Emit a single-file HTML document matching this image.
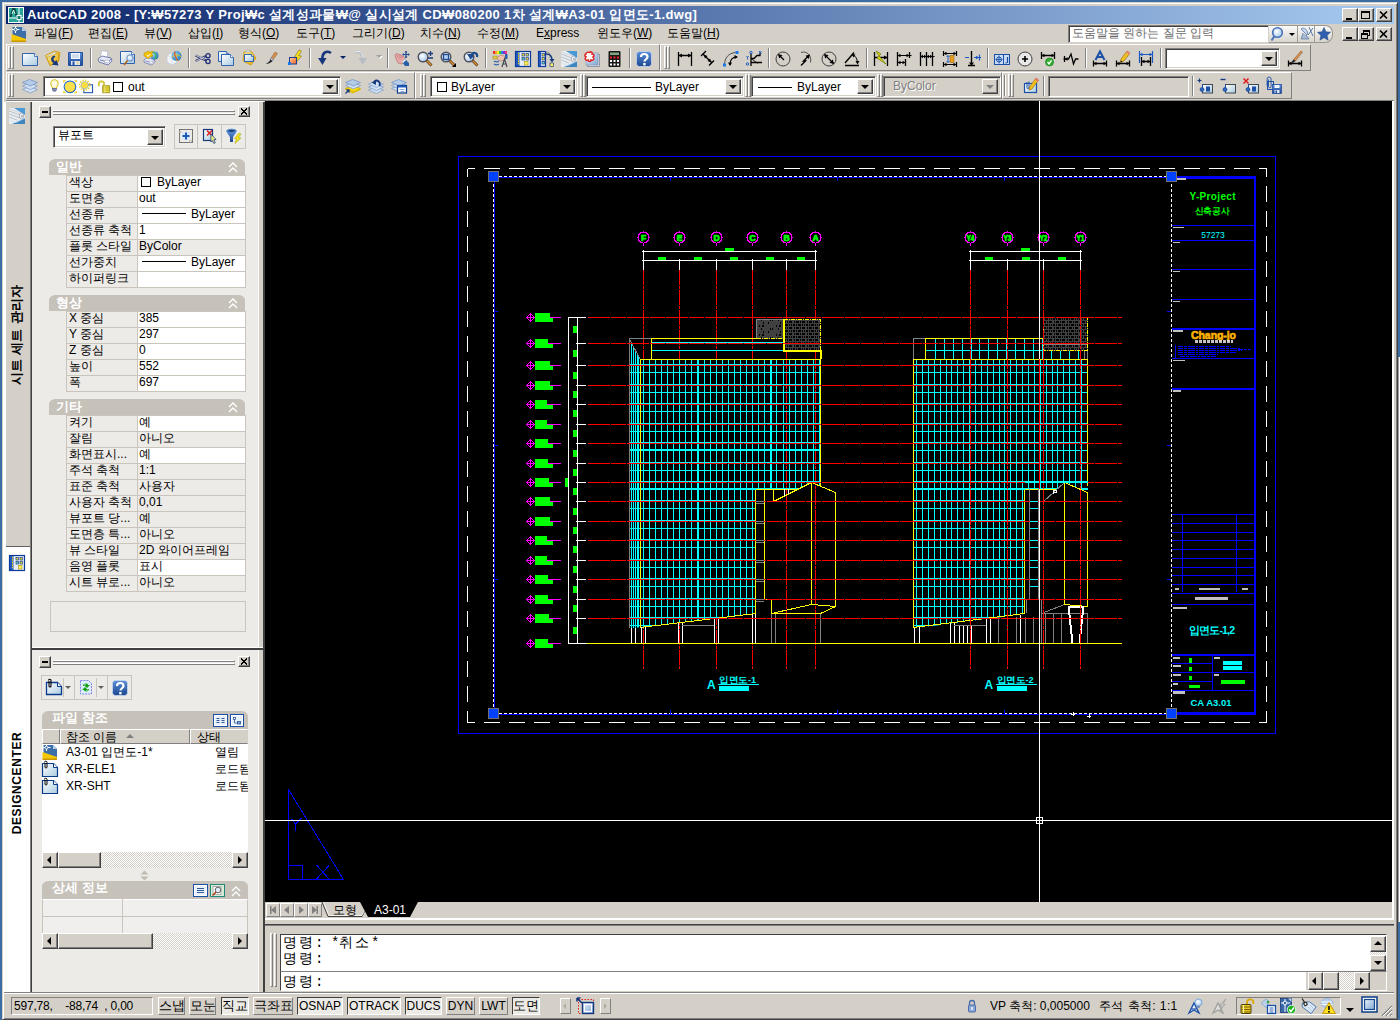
<!DOCTYPE html>
<html><head><meta charset="utf-8"><title>AutoCAD 2008</title><style>
*{box-sizing:border-box}
html,body{margin:0;padding:0}
body{width:1400px;height:1022px;overflow:hidden;position:relative;background:#3a6ea5;font-family:"Liberation Sans",sans-serif;font-size:12px;color:#000;line-height:1}
.a{position:absolute}
.t{position:absolute;white-space:nowrap;line-height:14px;height:14px}
.face{background:#d4d0c8}
.raised{border:1px solid;border-color:#fff #404040 #404040 #fff;box-shadow:inset -1px -1px 0 #808080}
.raised1{border:1px solid;border-color:#fff #808080 #808080 #fff}
.sunk1{border:1px solid;border-color:#808080 #fff #fff #808080}
.sunk2{border:1px solid;border-color:#808080 #fff #fff #808080;box-shadow:inset 1px 1px 0 #404040,inset -1px -1px 0 #d4d0c8}
.btn{position:absolute;background:#d4d0c8;border:1px solid;border-color:#fff #404040 #404040 #fff;box-shadow:inset -1px -1px 0 #808080}
.grip{position:absolute;width:3px;border:1px solid;border-color:#fff #808080 #808080 #fff;background:#d4d0c8}
.vsep{position:absolute;width:2px;border-left:1px solid #808080;border-right:1px solid #fff}
.combo{position:absolute;background:#fff;border:1px solid;border-color:#808080 #fff #fff #808080;box-shadow:inset 1px 1px 0 #404040,inset -1px -1px 0 #d4d0c8}
.cbtn{position:absolute;right:2px;top:2px;bottom:2px;width:16px;background:#d4d0c8;border:1px solid;border-color:#fff #404040 #404040 #fff;box-shadow:inset -1px -1px 0 #808080}
.arr{position:absolute;width:0;height:0;border-left:4px solid transparent;border-right:4px solid transparent;border-top:4px solid #000}
.tb{position:absolute;background:#d4d0c8;border:1px solid;border-color:#fff #808080 #808080 #fff}
svg{position:absolute;overflow:visible}
u{text-decoration:underline}
</style></head><body>
<svg width="0" height="0" style="left:0;top:0"><defs><linearGradient id="gp" x1="0" y1="0" x2="1" y2="1"><stop offset="0" stop-color="#fff"/><stop offset="1" stop-color="#a9cbe0"/></linearGradient><linearGradient id="gy" x1="0" y1="0" x2="1" y2="1"><stop offset="0" stop-color="#fff3a0"/><stop offset="1" stop-color="#e0a000"/></linearGradient><linearGradient id="gb" x1="0" y1="0" x2="0" y2="1"><stop offset="0" stop-color="#5b8fd8"/><stop offset="1" stop-color="#1d4690"/></linearGradient><linearGradient id="gl" x1="0" y1="0" x2="1" y2="1"><stop offset="0" stop-color="#e8f1fa"/><stop offset="1" stop-color="#7fa6d4"/></linearGradient><linearGradient id="go" x1="0" y1="0" x2="1" y2="1"><stop offset="0" stop-color="#ffd0a0"/><stop offset="1" stop-color="#f06020"/></linearGradient><radialGradient id="gg" cx="0.35" cy="0.35" r="0.8"><stop offset="0" stop-color="#8fd8f8"/><stop offset="1" stop-color="#1a6ab0"/></radialGradient><radialGradient id="gm" cx="0.4" cy="0.4" r="0.7"><stop offset="0" stop-color="#fff"/><stop offset="1" stop-color="#9cc4ee"/></radialGradient></defs></svg>
<div class="a" style="left:0px;top:1020px;width:1400px;height:2px;background:#fff"></div>
<div class="a" style="left:2px;top:2px;width:1396px;height:1018px;background:#d4d0c8;border:1px solid;border-color:#d4d0c8 #404040 #404040 #d4d0c8;box-shadow:inset 1px 1px 0 #fff,inset -1px -1px 0 #808080"></div>
<div class="a" style="left:6px;top:6px;width:1388px;height:18px;background:linear-gradient(to right,#0a246a 0%,#a6caf0 100%)"></div>
<svg style="left:8px;top:7px" width="16" height="16" viewBox="0 0 16 16"><rect width="16" height="16" fill="#fff"/><rect x="1" y="1" width="14" height="14" fill="#2aa59a"/><path d="M2.500 10L5 2h1.500l2 7" stroke="#0b4a44" stroke-width="2" fill="none"/><path d="M4 7L5.500 3 7 7" stroke="#d0fff8" stroke-width="1" fill="none"/><path d="M1 11h7M11 1v7M11 13v2M13.500 10.500h2" stroke="#fff" stroke-width="1"/><rect x="9" y="8.500" width="4" height="4" fill="#1b7a70" stroke="#fff"/></svg>
<div class="t" style="left:27px;top:8px;color:#fff;font-weight:bold;font-size:13px;letter-spacing:0.34px">AutoCAD 2008 - [Y:₩57273 Y Proj₩c 설계성과물₩@ 실시설계 CD₩080200 1차 설계₩A3-01 입면도-1.dwg]</div>
<div class="btn" style="left:1342px;top:8px;width:16px;height:14px"><svg style="left:0;top:0" width="14" height="12" viewBox="0 0 14 12" shape-rendering="crispEdges"><rect x="3" y="9" width="6" height="2" fill="#000"/></svg></div>
<div class="btn" style="left:1358px;top:8px;width:16px;height:14px"><svg style="left:0;top:0" width="14" height="12" viewBox="0 0 14 12" shape-rendering="crispEdges"><rect x="2.5" y="2.5" width="8" height="7" fill="none" stroke="#000"/><rect x="2" y="2" width="9" height="2" fill="#000"/></svg></div>
<div class="btn" style="left:1376px;top:8px;width:16px;height:14px"><svg style="left:0;top:0" width="14" height="12" viewBox="0 0 14 12" shape-rendering="crispEdges"><path d="M3 2.500l7 7M10 2.500l-7 7" stroke="#000" stroke-width="1.700" fill="none" shape-rendering="geometricPrecision"/></svg></div>
<div class="btn" style="left:1342px;top:27px;width:16px;height:14px"><svg style="left:0;top:0" width="14" height="12" viewBox="0 0 14 12" shape-rendering="crispEdges"><rect x="3" y="9" width="6" height="2" fill="#000"/></svg></div>
<div class="btn" style="left:1358px;top:27px;width:16px;height:14px"><svg style="left:0;top:0" width="14" height="12" viewBox="0 0 14 12" shape-rendering="crispEdges"><rect x="4.5" y="2.5" width="6" height="5" fill="none" stroke="#000"/><rect x="4" y="2" width="7" height="2" fill="#000"/><rect x="2.5" y="5.5" width="6" height="5" fill="#d4d0c8" stroke="#000"/><rect x="2" y="5" width="7" height="2" fill="#000"/></svg></div>
<div class="btn" style="left:1376px;top:27px;width:16px;height:14px"><svg style="left:0;top:0" width="14" height="12" viewBox="0 0 14 12" shape-rendering="crispEdges"><path d="M3 2.500l7 7M10 2.500l-7 7" stroke="#000" stroke-width="1.700" fill="none" shape-rendering="geometricPrecision"/></svg></div>
<svg style="left:11px;top:26px" width="16" height="16" viewBox="0 0 16 16"><path d="M1.500 1h9.500l4 4v8H1.500z" fill="#3c6ea8"/><path d="M11 1l4 4h-4z" fill="#b5cde8"/><path d="M0.500 8l14.500 5v2.500H0.500z" fill="#f4c800"/><path d="M0.500 14.500h14.500v1.500H0.500z" fill="#c99700"/><path d="M4.500 0v7M1 3.500h7.500" stroke="#fff" stroke-width="1"/><circle cx="4.500" cy="3.500" r="1.500" fill="#3c6ea8" stroke="#fff"/></svg>
<div class="t" style="left:34px;top:26px;">파일(<u>F</u>)</div>
<div class="t" style="left:88px;top:26px;">편집(<u>E</u>)</div>
<div class="t" style="left:144px;top:26px;">뷰(<u>V</u>)</div>
<div class="t" style="left:188px;top:26px;">삽입(<u>I</u>)</div>
<div class="t" style="left:238px;top:26px;">형식(<u>O</u>)</div>
<div class="t" style="left:296px;top:26px;">도구(<u>T</u>)</div>
<div class="t" style="left:352px;top:26px;">그리기(<u>D</u>)</div>
<div class="t" style="left:420px;top:26px;">치수(<u>N</u>)</div>
<div class="t" style="left:477px;top:26px;">수정(<u>M</u>)</div>
<div class="t" style="left:536px;top:26px;">E<u>x</u>press</div>
<div class="t" style="left:597px;top:26px;">윈도우(<u>W</u>)</div>
<div class="t" style="left:667px;top:26px;">도움말(<u>H</u>)</div>
<div class="a" style="left:1068px;top:25px;width:201px;height:18px;background:#fff;border:1px solid;border-color:#808080 #d4d0c8 #d4d0c8 #808080;box-shadow:inset 1px 1px 0 #404040"></div>
<div class="t" style="left:1072px;top:26px;color:#6e6e6e">도움말을 원하는 질문 입력</div>
<div class="a" style="left:1269px;top:25px;width:64px;height:18px;background:linear-gradient(#fafafa,#d8d5cd);border:1px solid #9a978f;border-left:none;border-radius:0 8px 8px 0"></div>
<div class="a" style="left:1297px;top:26px;width:1px;height:16px;background:#a09d96"></div>
<div class="a" style="left:1314px;top:26px;width:1px;height:16px;background:#a09d96"></div>
<svg style="left:1271px;top:26px" width="16" height="16" viewBox="0 0 16 16"><circle cx="6.500" cy="6.500" r="4.800" fill="url(#gm)" stroke="#4870b8" stroke-width="1.600"/><path d="M3.500 10l-3 4.500" stroke="#4870b8" stroke-width="2"/></svg>
<svg style="left:1299px;top:26px" width="16" height="16" viewBox="0 0 16 16"><path d="M2 3c3-3 8 2 6 6z" fill="#c8d8ec" stroke="#5878a8" stroke-width="0.800"/><path d="M4 7l-2 6h8l-3-4" fill="#a8b8d0" stroke="#5878a8" stroke-width="0.700"/><path d="M10 1l4 9M14 2l-5 7" stroke="#5878a8" stroke-width="1"/></svg>
<svg style="left:1317px;top:27px" width="14" height="14" viewBox="0 0 16 16"><path d="M8 0.500l2.200 5 5.300 0.500-4 3.600 1.200 5.400L8 12.200 3.300 15l1.200-5.400-4-3.600 5.300-0.500z" fill="#3060b0" stroke="#20407c" stroke-width="0.600"/></svg>
<div class="arr" style="left:1289px;top:33px;border-left-width:3px;border-right-width:3px;border-top-width:3px"></div>
<div class="tb" style="left:6px;top:44px;width:654px;height:27px;"></div>
<div class="grip" style="left:8px;top:46px;height:23px"></div><div class="grip" style="left:11px;top:46px;height:23px"></div>
<svg style="left:22px;top:50px" width="16" height="16" viewBox="0 0 16 16"><path d="M0.5 3.5h12l3 3v9h-15z" fill="url(#gp)" stroke="#2f62b0"/><path d="M12.5 3.5v3h3" fill="#fff" stroke="#2f62b0" stroke-width="0.800"/></svg>
<svg style="left:45px;top:50px" width="16" height="16" viewBox="0 0 16 16"><path d="M0.500 5.500l9-4.500 5.500 1.500-1.500 9-8.500 4z" fill="url(#gy)" stroke="#c89400" stroke-width="0.800"/><path d="M2.500 6l8-4 1 8-7 4z" fill="#eef4fa" stroke="#9ab" stroke-width="0.500"/><path d="M2 7.500l11-4.500 1 7.500-9 5z" fill="url(#gy)" stroke="#c89400" stroke-width="0.600"/><path d="M9.500 5.500c-4 1-4.500 5-1 7.500l-1.500 1.800 6.500 0.700-2-5.500-1.500 1.500c-2-1.500-2-4 0.500-4.500z" fill="#17387c"/></svg>
<svg style="left:68px;top:50px" width="16" height="16" viewBox="0 0 16 16"><path d="M0.500 2.500h14v13h-14z" fill="url(#gb)" stroke="#2450a0"/><rect x="3" y="3" width="9" height="6" fill="#f4f8ff"/><path d="M4 5h7M4 7h7" stroke="#a0b4d0" stroke-width="0.800"/><rect x="3" y="11" width="9" height="4" fill="#dfe8f4"/><rect x="4.500" y="11.500" width="2" height="3.500" fill="#2450a0"/><rect x="9" y="11.500" width="1.500" height="3" fill="#e0d070"/></svg>
<div class="vsep" style="left:90px;top:48px;height:20px"></div>
<svg style="left:97px;top:50px" width="16" height="16" viewBox="0 0 16 16"><path d="M4.500 0.500l6.500 1-1 7-6.500-1z" fill="#fff" stroke="#a8b0cc" stroke-width="0.700"/><path d="M1 9l4-3 9 2 1 3-4 4-9-3z" fill="#e4e8f4" stroke="#5a64a0" stroke-width="0.800"/><path d="M3 10l8 2 3-3" fill="none" stroke="#5a64a0" stroke-width="0.800"/><path d="M7 12l4 1 2-2-4-1z" fill="#fff" stroke="#8890b8" stroke-width="0.500"/></svg>
<svg style="left:120px;top:50px" width="16" height="16" viewBox="0 0 16 16"><path d="M0.5 1.5h11l3 3v9h-14z" fill="url(#gp)" stroke="#2f62b0"/><path d="M11.5 1.5v3h3" fill="#fff" stroke="#2f62b0" stroke-width="0.800"/><circle cx="10" cy="8" r="3.200" fill="url(#gm)" stroke="#6a8cc0" stroke-width="1"/><path d="M7.500 10.500L4 15" stroke="#b06820" stroke-width="1.800"/></svg>
<svg style="left:143px;top:50px" width="16" height="16" viewBox="0 0 16 16"><g transform="translate(0,3) scale(0.8)"><path d="M4.500 0.500l6.500 1-1 7-6.500-1z" fill="#fff" stroke="#a8b0cc" stroke-width="0.700"/><path d="M1 9l4-3 9 2 1 3-4 4-9-3z" fill="#e4e8f4" stroke="#5a64a0" stroke-width="0.800"/><path d="M3 10l8 2 3-3" fill="none" stroke="#5a64a0" stroke-width="0.800"/><path d="M7 12l4 1 2-2-4-1z" fill="#fff" stroke="#8890b8" stroke-width="0.500"/></g><circle cx="11.500" cy="5.500" r="4" fill="url(#gg)"/><path d="M10 2c3 1 4 5 2 7" stroke="#40b040" stroke-width="1.200" fill="none"/><path d="M1 3l3-1 1-1 2 1 3-1-1 3 1 2-3 1-2 2-2-2-2-1z" fill="#f0c000" stroke="#c09000" stroke-width="0.500"/><path d="M4 5l1 1.500 2-2.500" stroke="#fff" stroke-width="1" fill="none"/></svg>
<svg style="left:166px;top:50px" width="16" height="16" viewBox="0 0 16 16"><path d="M1 5l5-2 5 2v7l-5 3-5-3z" fill="#f0f4fa" stroke="#b8c4d4" stroke-width="0.600"/><path d="M6 8v7M1 5l5 3 5-3" stroke="#c8d0dc" stroke-width="0.600" fill="none"/><circle cx="10.500" cy="6" r="5" fill="url(#gg)"/><path d="M6 7c3-3 7-3 9 0M8 2c2 3 3 6 3 9" stroke="#e8c020" stroke-width="1" fill="none"/><path d="M9 1.500c-1 4 1 7 3 9" stroke="#e03020" stroke-width="1" fill="none"/></svg>
<div class="vsep" style="left:188px;top:48px;height:20px"></div>
<svg style="left:195px;top:50px" width="16" height="16" viewBox="0 0 16 16"><path d="M0.500 5.500l10.500 5M0.500 11l10.500-5" stroke="#3a4270" stroke-width="2"/><path d="M0.500 5.200l9 4.300M0.500 11.300l9-4.300" stroke="#dfe4f4" stroke-width="0.800"/><circle cx="13" cy="5.800" r="2.100" fill="none" stroke="#1c2c78" stroke-width="1.300"/><circle cx="13" cy="11.500" r="2.100" fill="none" stroke="#1c2c78" stroke-width="1.300"/></svg>
<svg style="left:218px;top:50px" width="16" height="16" viewBox="0 0 16 16"><path d="M0.5 1.5h8l2 2v8h-10z" fill="url(#gp)" stroke="#2f62b0"/><path d="M8.5 1.5v2h2" fill="#fff" stroke="#2f62b0" stroke-width="0.800"/><path d="M3.5 4.5h9l3 3v8h-12z" fill="url(#gp)" stroke="#2f62b0"/><path d="M12.5 4.5v3h3" fill="#fff" stroke="#2f62b0" stroke-width="0.800"/></svg>
<svg style="left:241px;top:50px" width="16" height="16" viewBox="0 0 16 16"><path d="M3 2l7-1 5 7-5 7-8-4z" fill="url(#gy)" stroke="#c89400" stroke-width="0.800"/><path d="M4 2l2-2 3 0.500 1 1.500z" fill="#e8e8e8" stroke="#909090" stroke-width="0.500"/><path d="M3.5 4.5h7l2 2v5h-9z" fill="url(#gp)" stroke="#2f62b0"/><path d="M10.5 4.5v2h2" fill="#fff" stroke="#2f62b0" stroke-width="0.800"/></svg>
<svg style="left:264px;top:50px" width="16" height="16" viewBox="0 0 16 16"><path d="M11 2l2.500 1.500-5 7-2-1.500z" fill="#d89050" stroke="#805020" stroke-width="0.500"/><path d="M7.500 7.500l2 1.500-1.500 2.500-2-1.500z" fill="#c0c8d8" stroke="#606878" stroke-width="0.500"/><path d="M6.500 9.500l2 1.500c-2 2-4 3-7 3 2-1 4-2 5-4.500z" fill="#202020"/></svg>
<svg style="left:287px;top:50px" width="16" height="16" viewBox="0 0 16 16"><path d="M12 0l2.500 1-3 4.500 3 0.500-6 7 1.500-5.500-2.500-0.500z" fill="#f8e020" stroke="#807000" stroke-width="0.600"/><rect x="2.500" y="7.500" width="7" height="6.500" fill="url(#go)" stroke="#1c3c90" stroke-width="1"/><rect x="1" y="12" width="3" height="3" fill="#1878e8"/></svg>
<div class="vsep" style="left:309px;top:48px;height:20px"></div>
<svg style="left:317px;top:50px" width="16" height="16" viewBox="0 0 16 16"><path d="M14 3C9 0 5 3 5.500 9" fill="none" stroke="#17387c" stroke-width="2.600"/><path d="M1 8l4.500 7 4-7z" fill="#17387c"/></svg>
<svg style="left:352px;top:50px" width="16" height="16" viewBox="0 0 16 16"><path d="M2 3c5-3 9 0 8.500 6" fill="none" stroke="#b8bcc4" stroke-width="2.600"/><path d="M15 8l-4.500 7-4-7z" fill="#b8bcc4"/><path d="M2 2.500c5-3 9 0 9 5" fill="none" stroke="#fff" stroke-width="0.800"/></svg>
<div class="vsep" style="left:387px;top:48px;height:20px"></div>
<svg style="left:394px;top:51px" width="16" height="16" viewBox="0 0 16 16"><path d="M1 4l2-2 2 2 1-1 2 2 1 0 2 3-3 5-4-1-2-4z" fill="#e8a8a8" stroke="#b06868" stroke-width="0.600"/><path d="M2.500 4l3 4M4.500 3.500l2.500 4M6.500 4l2 3" stroke="#c07878" stroke-width="0.600"/><path d="M8 11l3-3 4 4v3h-4z" fill="#2860a8"/><path d="M8 11l3-3 1 1-3 3z" fill="#fff"/><path d="M12 0v7M8.500 3.500h7" stroke="#1e4a90" stroke-width="1.200"/><path d="M12 0l-1.500 1.500h3zM12 7l-1.500-1.500h3zM8.500 3.500l1.500-1.500v3zM15.500 3.500l-1.500-1.500v3z" fill="#1e4a90"/></svg>
<svg style="left:417px;top:51px" width="16" height="16" viewBox="0 0 16 16"><path d="M9 9l5.500 5.500" stroke="#3a2a18" stroke-width="2.600"/><path d="M9.500 9.500l4.800 4.800" stroke="#e09030" stroke-width="1.500"/><circle cx="6" cy="6" r="4.800" fill="url(#gm)" stroke="#50505c" stroke-width="1.400"/><path d="M11 2.500h5M13.500 0v5M11 7h5" stroke="#17387c" stroke-width="1.300"/></svg>
<svg style="left:440px;top:51px" width="16" height="16" viewBox="0 0 16 16"><path d="M9 9l5.500 5.500" stroke="#3a2a18" stroke-width="2.600"/><path d="M9.500 9.500l4.800 4.800" stroke="#e09030" stroke-width="1.500"/><circle cx="6" cy="6" r="4.800" fill="url(#gm)" stroke="#50505c" stroke-width="1.400"/><rect x="3.500" y="3.500" width="5" height="5" fill="#b8d0f0" stroke="#1e4a90" stroke-width="1.300"/><path d="M16 12v4h-4z" fill="#000"/></svg>
<svg style="left:463px;top:51px" width="16" height="16" viewBox="0 0 16 16"><path d="M9 9l5.500 5.500" stroke="#3a2a18" stroke-width="2.600"/><path d="M9.500 9.500l4.800 4.800" stroke="#e09030" stroke-width="1.500"/><circle cx="6" cy="6" r="4.800" fill="url(#gm)" stroke="#50505c" stroke-width="1.400"/><path d="M14 6c1-4-3-5-5-3" fill="none" stroke="#1e4a90" stroke-width="2.200"/><path d="M4 3h6v3l-2.500 2.500z" fill="#1e4a90"/></svg>
<div class="vsep" style="left:485px;top:48px;height:20px"></div>
<svg style="left:492px;top:51px" width="16" height="16" viewBox="0 0 16 16"><path d="M1 0h2v3H1z" fill="#f03030"/><path d="M3 0h2v3H3z" fill="#f0a020"/><path d="M5 0h2v3H5z" fill="#f0f020"/><path d="M7 0h2v3H7z" fill="#30c030"/><path d="M9 0h2v3H9z" fill="#2080f0"/><path d="M11 0h2v3h-2z" fill="#8030d0"/><path d="M13 0h2v3h-2z" fill="#f03090"/><path d="M4 7l5-3 6 2-2 3-5 1z" fill="#f0c0b0" stroke="#a06050" stroke-width="0.500"/><rect x="1" y="5" width="4" height="3" fill="#e0d040" stroke="#908020" stroke-width="0.500"/><path d="M2 10c2 1.500 3 1.500 5 0M2 13c2 1.500 3 1.500 5 0" stroke="#3868b0" stroke-width="1.300" fill="none"/><path d="M10 16l2.500-8 2.500 8M11 13h3" stroke="#404850" stroke-width="1.200" fill="none"/><rect x="13" y="3" width="2.500" height="5" fill="#2860b0"/></svg>
<svg style="left:515px;top:51px" width="16" height="16" viewBox="0 0 16 16"><rect x="0.500" y="0.500" width="15" height="15" fill="#e8eef8" stroke="#0a3a9a" stroke-width="1.200"/><rect x="1" y="1" width="3.500" height="14" fill="#2058c0"/><path d="M3 2.500h1M3 5h1M3 7.500h1M3 10h1M3 12.500h1" stroke="#ffe000" stroke-width="1.400"/><rect x="7" y="2.500" width="2.500" height="2.500" fill="#e8e040" stroke="#204080" stroke-width="0.700"/><rect x="11" y="2.500" width="2.500" height="2.500" fill="#e8e040" stroke="#204080" stroke-width="0.700"/><rect x="7" y="6.500" width="2.500" height="2.500" fill="#60d0c0" stroke="#204080" stroke-width="0.700"/><rect x="11" y="6.500" width="2.500" height="2.500" fill="#e8e040" stroke="#204080" stroke-width="0.700"/><rect x="9.500" y="10.500" width="3.500" height="3.500" fill="#fff060" stroke="#b0a020" stroke-width="0.700"/></svg>
<svg style="left:538px;top:51px" width="16" height="16" viewBox="0 0 16 16"><rect x="0.500" y="0.500" width="7" height="15" fill="#e8eef8" stroke="#0a3a9a" stroke-width="1.200"/><rect x="1" y="1" width="2" height="14" fill="#2058c0"/><rect x="4" y="2.500" width="2.500" height="2.500" fill="#e8e040" stroke="#204080" stroke-width="0.700"/><rect x="4" y="6.500" width="2.500" height="2.500" fill="#e8e040" stroke="#204080" stroke-width="0.700"/><rect x="4" y="10.500" width="2.500" height="2.500" fill="#60d0c0" stroke="#204080" stroke-width="0.700"/><path d="M8 1h2l2 2v4" fill="none" stroke="#808890" stroke-width="1"/><path d="M8 3c4 0 6 2 6 6" fill="none" stroke="#17387c" stroke-width="1.400"/><path d="M11.500 8h5l-2.500 3.500z" fill="#17387c"/><rect x="12" y="12" width="3.500" height="3.500" fill="#fff060" stroke="#204080" stroke-width="0.700"/></svg>
<svg style="left:561px;top:51px" width="16" height="16" viewBox="0 0 16 16"><rect width="16" height="16" fill="#e9edf1"/><path d="M5 0H16V7z" fill="#4a9ad8"/><path d="M3 16L16 10V16z" fill="#3f86c0"/><path d="M0 3l11 4M0 6l10 3.500M0 9l8 3" stroke="#aeb6be" stroke-width="0.800"/><path d="M0 1l12 4c3 1 3 5 0 5.500L0 6" fill="none" stroke="#c9cfd5" stroke-width="0.700"/><ellipse cx="12.500" cy="8" rx="2.300" ry="2.900" fill="#f6f8fa" stroke="#9098a0" stroke-width="0.700"/><ellipse cx="12.800" cy="8.200" rx="1" ry="1.400" fill="#a8b0b8"/><path d="M0 12l7 2.500 9-4.500" stroke="#d0e4f4" stroke-width="0.700" fill="none"/></svg>
<svg style="left:584px;top:51px" width="16" height="16" viewBox="0 0 16 16"><rect x="3.500" y="3.500" width="12" height="12" fill="#d8dce4" stroke="#808898" stroke-width="0.800"/><rect x="2" y="2" width="12" height="12" fill="url(#gl)" stroke="#8090a8" stroke-width="0.600"/><path d="M2 3c0-2 3-2 3-1 1-2 4-1 3 1 2 0 3 2 1 3 2 2 0 4-2 3 0 2-3 2-3 0-2 1-4-1-2-3-2-1-1-3 0-3z" fill="#fff" stroke="#e02020" stroke-width="1.500"/></svg>
<svg style="left:607px;top:51px" width="16" height="16" viewBox="0 0 16 16"><rect x="1.500" y="0" width="12" height="16" rx="1" fill="#181818"/><rect x="3" y="1.500" width="9" height="2.500" fill="#80a880"/><g fill="#fff"><rect x="3" y="9" width="2" height="2"/><rect x="6.500" y="9" width="2" height="2"/><rect x="10" y="9" width="2" height="2"/><rect x="3" y="12.500" width="2" height="2"/><rect x="6.500" y="12.500" width="2" height="2"/><rect x="10" y="12.500" width="2" height="2"/></g><g fill="#f02020"><rect x="3" y="5.500" width="2" height="2"/><rect x="6.500" y="5.500" width="2" height="2"/><rect x="10" y="5.500" width="2" height="2"/></g></svg>
<div class="vsep" style="left:629px;top:48px;height:20px"></div>
<svg style="left:636px;top:51px" width="16" height="16" viewBox="0 0 16 16"><rect x="0.500" y="0.500" width="15" height="15" rx="3" fill="url(#gb)" stroke="#c8d8f0" stroke-width="0.800"/><path d="M5 6c0-4 6.500-4 6.500 0 0 2-3 2.500-3 4.500" fill="none" stroke="#fff" stroke-width="2.200"/><rect x="7.200" y="12" width="2.400" height="2.400" fill="#fff"/></svg>
<div class="arr" style="left:340px;top:56px;border-left-width:3px;border-right-width:3px;border-top-width:3px;border-top-color:#0a246a"></div>
<div class="arr" style="left:377px;top:56px;border-left-width:3px;border-right-width:3px;border-top-width:3px;border-top-color:#fff"></div>
<div class="arr" style="left:376px;top:55px;border-left-width:3px;border-right-width:3px;border-top-width:3px;border-top-color:#a0a0a0"></div>
<div class="tb" style="left:660px;top:44px;width:651px;height:27px;"></div>
<div class="grip" style="left:664px;top:46px;height:23px"></div><div class="grip" style="left:667px;top:46px;height:23px"></div>
<svg style="left:677px;top:51px" width="16" height="16" viewBox="0 0 16 16"><path d="M1.500 1v14M14.500 1v14M1.500 4.500h13" stroke="#000" fill="none" stroke-width="1.300"/><path d="M1.500 4.500l3.500-2v4zM14.500 4.500l-3.500-2v4z" fill="#000"/></svg>
<svg style="left:700px;top:51px" width="16" height="16" viewBox="0 0 16 16"><path d="M3 3l9 9M1 5l5-5M9 14.500l5-5" stroke="#000" fill="none" stroke-width="1.400"/><path d="M3.500 3.500l4 1.500-2.500 2.500zM11.500 11.500l-4-1.500 2.500-2.500z" fill="#000"/></svg>
<svg style="left:723px;top:51px" width="16" height="16" viewBox="0 0 16 16"><path d="M1.500 14c0-7 4-12 11-12.500" fill="none" stroke="#505050" stroke-width="1"/><path d="M7 14c0-5 2-8 7-8" stroke="#000" fill="none" stroke-width="1.200"/><path d="M7 15l-2-3.500h4zM15 6l-3.500-2v4z" fill="#000"/><rect x="0" y="12.500" width="3" height="3" fill="#1878e8"/><rect x="12.500" y="0" width="3" height="3" fill="#1878e8"/></svg>
<svg style="left:746px;top:51px" width="16" height="16" viewBox="0 0 16 16"><path d="M5 2v13M5 11.500h11M5 7.500h3l3-3h3v-3" stroke="#000" fill="none" stroke-width="1.300"/><path d="M5 7.500l7 5" stroke="#000" fill="none" stroke-width="0.800"/><circle cx="5" cy="1.500" r="1.200" fill="none" stroke="#1858c0"/><circle cx="1.500" cy="13" r="1.200" fill="none" stroke="#1858c0"/><path d="M0.500 5l1 1.500 1-1.500M1.500 6.500v2M13 0l2.500 3M15.500 0l-2.500 3" stroke="#1858c0" stroke-width="0.900" fill="none"/></svg>
<div class="vsep" style="left:768px;top:48px;height:20px"></div>
<svg style="left:775px;top:51px" width="16" height="16" viewBox="0 0 16 16"><circle cx="8" cy="8" r="7" fill="none" stroke="#404040" stroke-width="1"/><path d="M9 9l-5-5" stroke="#000" fill="none" stroke-width="1.300"/><path d="M3 3l4.500 1.200-3.300 3.300z" fill="#000"/></svg>
<svg style="left:798px;top:51px" width="16" height="16" viewBox="0 0 16 16"><path d="M3 1.500c6-2 11 3 9.500 10" fill="none" stroke="#505050" stroke-width="1"/><path d="M3 14.500l4.500-4.500h-2l5-5" stroke="#000" fill="none" stroke-width="1.400"/><path d="M12 3.500l-1.200 4.500-3.300-3.300z" fill="#000"/></svg>
<svg style="left:821px;top:51px" width="16" height="16" viewBox="0 0 16 16"><circle cx="8" cy="8" r="7" fill="none" stroke="#404040" stroke-width="1"/><path d="M3.500 3.500l9 9" stroke="#000" fill="none" stroke-width="1.300"/><path d="M3 3l4.500 1.200-3.300 3.300zM13 13l-4.500-1.200 3.300-3.300z" fill="#000"/></svg>
<svg style="left:844px;top:51px" width="16" height="16" viewBox="0 0 16 16"><path d="M1 14.500h14M1 12l9-10.500" stroke="#000" fill="none" stroke-width="1.400"/><path d="M8 3.500c3 1 5.500 4 5.500 8.500" stroke="#000" fill="none" stroke-width="1"/><path d="M7.500 3l4 0.500-2 3zM13.500 13.500l-2-3.500h4z" fill="#000"/></svg>
<div class="vsep" style="left:866px;top:48px;height:20px"></div>
<svg style="left:873px;top:51px" width="16" height="16" viewBox="0 0 16 16"><path d="M1.500 1v14M14.500 1v14M1.500 6.500h13" stroke="#000" fill="none" stroke-width="1.300"/><path d="M3 0l5 3-2 2 7 8-9-6 2-2z" fill="#f0d000" stroke="#608000" stroke-width="0.700"/><path d="M14.500 6.500l-3.500-2v4z" fill="#000"/></svg>
<svg style="left:896px;top:51px" width="16" height="16" viewBox="0 0 16 16"><path d="M1.500 1v14M9.500 8v7M13.500 1v6" stroke="#000" fill="none" stroke-width="1.300"/><path d="M1.500 4.500h14M1.500 11.500h8" stroke="#000" fill="none" stroke-width="1.100"/><path d="M1.500 4.500l3-1.800v3.600zM13.500 4.500l-3-1.800v3.600zM1.500 11.500l3-1.800v3.600zM9.500 11.500l-3-1.800v3.600z" fill="#000"/></svg>
<svg style="left:919px;top:51px" width="16" height="16" viewBox="0 0 16 16"><path d="M1.500 1v14M7.500 1v14M13.500 1v14" stroke="#000" fill="none" stroke-width="1.300"/><path d="M1.500 5.500h14" stroke="#000" fill="none" stroke-width="1.100"/><path d="M1.500 5.500l2.500-1.800v3.600zM7.500 5.500l-2.500-1.800v3.600zM7.500 5.500l2.500-1.800v3.600zM13.500 5.500l-2.500-1.800v3.600z" fill="#000"/></svg>
<svg style="left:942px;top:51px" width="16" height="16" viewBox="0 0 16 16"><path d="M1.500 0v5M14.500 0v5M1.500 2.500h13M1.500 11v5M14.500 11v5M1.500 13.500h13" stroke="#000" fill="none" stroke-width="1.200"/><path d="M1.500 2.500l3-1.800v3.600zM14.500 2.500l-3-1.800v3.600zM1.500 13.500l3-1.800v3.600zM14.500 13.500l-3-1.800v3.600z" fill="#000"/><rect x="8" y="4.500" width="4" height="7" fill="#e8a020" stroke="#905000" stroke-width="0.500"/><path d="M6 4.500v7M4.500 6l1.500-1.500 1.500 1.500M4.500 10l1.500 1.500 1.500-1.500" stroke="#1858c0" stroke-width="0.900" fill="none"/></svg>
<svg style="left:965px;top:51px" width="16" height="16" viewBox="0 0 16 16"><path d="M6.500 0v13M3 14.500h7" stroke="#000" fill="none" stroke-width="1.400"/><path d="M6.500 15l-2.500-3.500h5z" fill="#000"/><path d="M0 6.500h4M9 6.500h7M14.500 3.500v6" stroke="#1858c0" stroke-width="1.200"/><path d="M14 6.500l-3-1.800v3.600z" fill="#1858c0"/></svg>
<div class="vsep" style="left:987px;top:48px;height:20px"></div>
<svg style="left:994px;top:51px" width="16" height="16" viewBox="0 0 16 16"><rect x="0.500" y="3.500" width="15" height="10" fill="#c8dcf4" stroke="#1c50a8" stroke-width="1"/><path d="M9.500 3.500v10" stroke="#1c50a8"/><circle cx="5" cy="8.500" r="2.500" fill="none" stroke="#1c50a8"/><path d="M5 4.500v8M1.500 8.500h7" stroke="#1c50a8" stroke-width="0.900"/><path d="M11.500 12h1M13.500 6v6" stroke="#1c50a8" stroke-width="1.300"/></svg>
<svg style="left:1017px;top:51px" width="16" height="16" viewBox="0 0 16 16"><circle cx="8" cy="8" r="7" fill="#e8e8e8" stroke="#404040" stroke-width="1"/><path d="M5 8h6M8 5v6" stroke="#000" stroke-width="1.600"/></svg>
<svg style="left:1040px;top:51px" width="16" height="16" viewBox="0 0 16 16"><path d="M1.500 1v7M14.500 1v7M1.500 4.500h13" stroke="#000" fill="none" stroke-width="1.300"/><path d="M1.500 4.500l3-1.800v3.600zM14.500 4.500l-3-1.800v3.600z" fill="#000"/><circle cx="9.500" cy="11" r="4" fill="#30b030" stroke="#107010" stroke-width="0.600"/><path d="M7.500 11l1.500 1.800 2.500-3.500" stroke="#fff" stroke-width="1.400" fill="none"/></svg>
<svg style="left:1063px;top:51px" width="16" height="16" viewBox="0 0 16 16"><path d="M1.500 5v6M0.500 8h5l2.500-5 2.500 10 2-5h3" stroke="#000" fill="none" stroke-width="1.300"/><path d="M1.500 8l3-1.800v3.600z" fill="#000"/></svg>
<div class="vsep" style="left:1085px;top:48px;height:20px"></div>
<svg style="left:1092px;top:51px" width="16" height="16" viewBox="0 0 16 16"><path d="M1.500 9.500v6M14.500 9.500v6M1.500 12.500h13" stroke="#000" stroke-width="1.300" fill="none"/><path d="M1.500 12.500l3-1.800v3.600zM14.500 12.500l-3-1.800v3.600z" fill="#000"/><path d="M3.500 9L8 0.500 12.500 9M5.500 6h5" stroke="#1c50a8" stroke-width="2" fill="none"/></svg>
<svg style="left:1115px;top:51px" width="16" height="16" viewBox="0 0 16 16"><path d="M1.500 9.500v6M14.500 9.500v6M1.500 12.500h13" stroke="#000" stroke-width="1.300" fill="none"/><path d="M1.500 12.500l3-1.800v3.600zM14.500 12.500l-3-1.800v3.600z" fill="#000"/><path d="M12 0l3 2-6 8-3.500 1.500L6 8z" fill="#f0c020" stroke="#906000" stroke-width="0.600"/><path d="M12 0l3 2-1 1.500-3-2z" fill="#f08080"/><path d="M5.500 11.500l0.300-2 1.700 1.200z" fill="#000"/></svg>
<svg style="left:1138px;top:51px" width="16" height="16" viewBox="0 0 16 16"><path d="M3.500 6v9M12.500 6v9M3.500 10.500h9" stroke="#000" fill="none" stroke-width="1.300"/><path d="M3.500 10.500l3-1.800v3.600zM12.500 10.500l-3-1.800v3.600z" fill="#000"/><path d="M1.500 0v12M14.500 0v12M1.500 3.500h13" stroke="#1858c0" stroke-width="1.200" fill="none"/><path d="M1.500 3.500l3-1.800v3.600zM14.500 3.500l-3-1.800v3.600z" fill="#1858c0"/></svg>
<div class="vsep" style="left:1160px;top:48px;height:20px"></div>
<svg style="left:1287px;top:51px" width="16" height="16" viewBox="0 0 16 16"><path d="M1.500 9.500v6M14.500 9.500v6M1.500 12.500h13" stroke="#000" stroke-width="1.300" fill="none"/><path d="M1.500 12.500l3-1.800v3.600zM14.500 12.500l-3-1.800v3.600z" fill="#000"/><path d="M14 0l1.500 1-7 9-2-1.500z" fill="#d89050" stroke="#805020" stroke-width="0.500"/><path d="M6.500 8.500l2 1.500c-2 2-4 2-6.500 2 2-1 3.500-1.500 4.500-3.500z" fill="#202020"/></svg>
<div class="combo" style="left:1165px;top:48px;width:115px;height:21px;background:#fff"><div class="cbtn"><div class="arr" style="left:3px;top:5px;border-top-color:#000"></div></div></div>
<div class="tb" style="left:6px;top:72px;width:409px;height:27px;"></div>
<div class="grip" style="left:8px;top:74px;height:23px"></div><div class="grip" style="left:11px;top:74px;height:23px"></div>
<svg style="left:22px;top:78px" width="16" height="16" viewBox="0 0 16 16"><path d="M0.500 11.5l7-3 8 3-7 3.500z" fill="#d0e0f2" stroke="#7898c4" stroke-width="0.700"/><path d="M0.500 8l7-3 8 3-7 3.500z" fill="#d0e0f2" stroke="#7898c4" stroke-width="0.700"/><path d="M0.500 4.5l7-3 8 3-7 3.500z" fill="#b4cce8" stroke="#6a8cbc" stroke-width="0.700"/></svg>
<div class="combo" style="left:43px;top:76px;width:298px;height:21px;background:#fff"><svg style="left:4px;top:2px" width="13" height="13" viewBox="0 0 16 16"><path d="M3.500 5.500a4.500 4.500 0 1 1 9 0c0 2.500-2 3.500-2 6h-5c0-2.500-2-3.500-2-6z" fill="#fffbe0" stroke="#d8c020" stroke-width="1.300"/><rect x="5.500" y="11.500" width="5" height="2.500" fill="#8890c0" stroke="#404880" stroke-width="0.600"/><path d="M6.500 15h3" stroke="#404880"/></svg><svg style="left:19px;top:3px" width="14" height="14" viewBox="0 0 16 16"><path d="M0 1h3v-1zM16 1h-3v-1zM0 14h3v1.500zM16 14h-3v1.500z" fill="#f0d020"/><rect x="0" y="0.500" width="2" height="2" fill="#f0d020"/><rect x="14" y="0.500" width="2" height="2" fill="#f0d020"/><rect x="0" y="13" width="2" height="2" fill="#f0d020"/><rect x="14" y="13" width="2" height="2" fill="#f0d020"/><circle cx="8" cy="7.800" r="6.700" fill="url(#gy)" stroke="#1868d0" stroke-width="1.200"/><circle cx="8" cy="7.800" r="5.600" fill="#fae04a"/></svg><svg style="left:35px;top:3px" width="14" height="14" viewBox="0 0 16 16"><rect x="5.500" y="5.500" width="10" height="9" fill="#fff" stroke="#1c50a8" stroke-width="1.200"/><circle cx="6.500" cy="6" r="5.800" fill="none" stroke="#f0d020" stroke-width="1.600" stroke-dasharray="1.600 1.400"/><circle cx="6.500" cy="6" r="4.300" fill="#f8dc40" stroke="#88b0e0" stroke-width="0.700"/></svg><svg style="left:53px;top:3px" width="14" height="14" viewBox="0 0 16 16"><path d="M2 7V4.500a3 3 0 0 1 6 0V6" fill="none" stroke="#c0b010" stroke-width="2"/><path d="M2 7V4.500a3 3 0 0 1 6 0V6" fill="none" stroke="#fff890" stroke-width="0.600"/><path d="M6.500 6.500h8v8h-8z" fill="#e8dc40" stroke="#908010" stroke-width="0.900"/><path d="M7 9h7M7 11.500h7" stroke="#a89810" stroke-width="0.800"/><path d="M9 6.500v8" stroke="#fff8a0" stroke-width="0.800"/></svg><div class="a" style="left:69px;top:5px;width:10px;height:10px;border:1px solid #000;background:#fff"></div><div class="t" style="left:84px;top:3px">out</div><div class="cbtn"><div class="arr" style="left:3px;top:5px;border-top-color:#000"></div></div></div>
<svg style="left:345px;top:78px" width="16" height="16" viewBox="0 0 16 16"><path d="M0.500 10.5l7-3 8 3-7 3.500z" fill="#f8dc10" stroke="#c0a000" stroke-width="0.700"/><path d="M0.500 10.500l7 3.500 8-3.500v1.500l-8 3.500-7-3.500z" fill="#e0c000"/><path d="M0.500 7.5l7-3 8 3-7 3.500z" fill="#d0e0f2" stroke="#7898c4" stroke-width="0.700"/><path d="M0.500 4.5l7-3 8 3-7 3.500z" fill="#b4cce8" stroke="#6a8cbc" stroke-width="0.700"/><path d="M0.500 15.500l3-3M1.500 12h2.500v2.500" stroke="#17387c" stroke-width="1.300" fill="none"/></svg>
<svg style="left:368px;top:78px" width="16" height="16" viewBox="0 0 16 16"><path d="M0.500 12l7-3 8 3-7 3.500z" fill="#d0e0f2" stroke="#7898c4" stroke-width="0.700"/><path d="M0.500 9l7-3 8 3-7 3.500z" fill="#d0e0f2" stroke="#7898c4" stroke-width="0.700"/><path d="M0.500 6l7-3 8 3-7 3.500z" fill="#cfe0f2" stroke="#7fa0cc" stroke-width="0.700"/><path d="M11.500 8c1.500-4-2-6.500-5-5" fill="none" stroke="#17387c" stroke-width="1.800"/><path d="M3.500 4.500l4.500-2.500v5z" fill="#17387c"/></svg>
<svg style="left:391px;top:78px" width="16" height="16" viewBox="0 0 16 16"><path d="M0.500 10.5l7-3 8 3-7 3.500z" fill="#d0e0f2" stroke="#7898c4" stroke-width="0.700"/><path d="M0.500 7.5l7-3 8 3-7 3.500z" fill="#d0e0f2" stroke="#7898c4" stroke-width="0.700"/><path d="M0.500 4.5l7-3 8 3-7 3.500z" fill="#b4cce8" stroke="#6a8cbc" stroke-width="0.700"/><rect x="6.500" y="7.500" width="9" height="7.500" fill="#fff" stroke="#0a3a8a" stroke-width="1.200"/><rect x="6.500" y="7.500" width="9" height="2" fill="#2058c0"/><path d="M8.500 11.500h5M9.500 13.500h4" stroke="#88a8d8" stroke-width="1"/></svg>
<div class="tb" style="left:415px;top:72px;width:587px;height:27px;"></div>
<div class="grip" style="left:420px;top:74px;height:23px"></div><div class="grip" style="left:423px;top:74px;height:23px"></div>
<div class="combo" style="left:430px;top:76px;width:148px;height:21px;background:#fff"><div class="a" style="left:6px;top:5px;width:10px;height:10px;border:1px solid #000;background:#fff"></div><div class="t" style="left:20px;top:3px">ByLayer</div><div class="cbtn"><div class="arr" style="left:3px;top:5px;border-top-color:#000"></div></div></div>
<div class="grip" style="left:580px;top:74px;height:23px"></div><div class="grip" style="left:583px;top:74px;height:23px"></div>
<div class="combo" style="left:586px;top:76px;width:158px;height:21px;background:#fff"><div class="a" style="left:5px;top:10px;width:59px;height:1px;background:#000"></div><div class="t" style="left:68px;top:3px">ByLayer</div><div class="cbtn"><div class="arr" style="left:3px;top:5px;border-top-color:#000"></div></div></div>
<div class="grip" style="left:745px;top:74px;height:23px"></div><div class="grip" style="left:748px;top:74px;height:23px"></div>
<div class="combo" style="left:751px;top:76px;width:125px;height:21px;background:#fff"><div class="a" style="left:6px;top:10px;width:34px;height:1px;background:#000"></div><div class="t" style="left:45px;top:3px">ByLayer</div><div class="cbtn"><div class="arr" style="left:3px;top:5px;border-top-color:#000"></div></div></div>
<div class="grip" style="left:877px;top:74px;height:23px"></div><div class="grip" style="left:880px;top:74px;height:23px"></div>
<div class="combo" style="left:883px;top:76px;width:118px;height:21px;background:#d4d0c8"><div class="t" style="left:9px;top:2px;color:#808080;text-shadow:1px 1px 0 #fff">ByColor</div><div class="cbtn"><div class="arr" style="left:3px;top:5px;border-top-color:#808080"></div></div></div>
<div class="tb" style="left:1002px;top:72px;width:290px;height:27px;"></div>
<div class="vsep" style="left:1004px;top:75px;height:21px"></div>
<div class="grip" style="left:1008px;top:74px;height:23px"></div><div class="grip" style="left:1011px;top:74px;height:23px"></div>
<svg style="left:1023px;top:78px" width="16" height="16" viewBox="0 0 16 16"><rect x="1.500" y="5.500" width="12" height="9" fill="url(#gp)" stroke="#1c50a8" stroke-width="1.200"/><path d="M4 4v5.500a1 1 0 0 0 2 0V3.500" fill="none" stroke="#1c50a8" stroke-width="1"/><path d="M13 0l2.500 2-6.500 9-3 1 0.500-3z" fill="#f0c020" stroke="#906000" stroke-width="0.600"/><path d="M13 0l2.500 2-1 1.400-2.500-2z" fill="#f07080"/></svg>
<div class="vsep" style="left:1043px;top:76px;height:20px"></div>
<div class="a" style="left:1048px;top:76px;width:141px;height:21px;background:#d4d0c8;border:1px solid;border-color:#808080 #fff #fff #808080;box-shadow:inset 1px 1px 0 #404040"></div>
<div class="vsep" style="left:1192px;top:76px;height:20px"></div>
<svg style="left:1197px;top:78px" width="16" height="16" viewBox="0 0 16 16"><rect x="5.500" y="6.500" width="10" height="8.500" fill="url(#gp)" stroke="#404850" stroke-width="1"/><rect x="9" y="8.500" width="4" height="5" fill="#1c50a8"/><path d="M5.500 6.500v5" stroke="#1c50a8" stroke-width="1"/><circle cx="5" cy="11.500" r="2" fill="#2868c8" stroke="#17387c" stroke-width="0.600"/><path d="M0.500 2.500h4M2.500 0.500v4" stroke="#17387c" stroke-width="1.200"/></svg>
<svg style="left:1220px;top:78px" width="16" height="16" viewBox="0 0 16 16"><rect x="5.500" y="6.500" width="10" height="8.500" fill="url(#gp)" stroke="#404850" stroke-width="1"/><path d="M5.500 6.500v5" stroke="#1c50a8" stroke-width="1"/><circle cx="5" cy="11.500" r="2" fill="#2868c8" stroke="#17387c" stroke-width="0.600"/><path d="M0.500 1.500h5" stroke="#17387c" stroke-width="1.400"/></svg>
<svg style="left:1243px;top:78px" width="16" height="16" viewBox="0 0 16 16"><rect x="5.500" y="6.500" width="10" height="8.500" fill="url(#gp)" stroke="#404850" stroke-width="1"/><rect x="9" y="8.500" width="4" height="5" fill="#1c50a8"/><path d="M5.500 6.500v5" stroke="#1c50a8" stroke-width="1"/><circle cx="5" cy="11.500" r="2" fill="#2868c8" stroke="#17387c" stroke-width="0.600"/><path d="M0.500 0.500l5 5M5.500 0.500l-5 5" stroke="#e02020" stroke-width="1.600"/></svg>
<svg style="left:1266px;top:78px" width="16" height="16" viewBox="0 0 16 16"><path d="M2.500 1.500v7a1.300 1.300 0 0 0 2.600 0V1a1.500 1.500 0 0 0-4 0v7" fill="none" stroke="#1c50a8" stroke-width="0.900"/><rect x="1.500" y="3.500" width="6" height="8" fill="none" stroke="#1c50a8"/><rect x="6.500" y="6.500" width="9" height="9" fill="url(#gb)" stroke="#2450a0" stroke-width="0.800"/><rect x="8.500" y="7" width="5" height="3" fill="#f4f8ff"/><rect x="8.500" y="12" width="5" height="3" fill="#dfe8f4"/><rect x="9.500" y="12.500" width="1.500" height="2.500" fill="#2450a0"/></svg>
<div class="a" style="left:6px;top:100px;width:1388px;height:1px;background:#808080"></div>
<div class="a" style="left:6px;top:101px;width:258px;height:1px;background:#fff"></div>
<div class="a" style="left:6px;top:102px;width:24px;height:445px;background:#d4d0c8"></div>
<div class="a" style="left:6px;top:546px;width:24px;height:1px;background:#606060"></div>
<div class="a" style="left:6px;top:547px;width:24px;height:446px;background:#fff"></div>
<div class="a" style="left:4px;top:102px;width:2px;height:891px;background:#fff"></div>
<div class="a" style="left:30px;top:102px;width:1px;height:891px;background:#808080"></div>
<div class="a" style="left:31px;top:102px;width:1px;height:891px;background:#404040"></div>
<svg style="left:9px;top:108px" width="16" height="16" viewBox="0 0 16 16"><rect width="16" height="16" fill="#e9edf1"/><path d="M5 0H16V7z" fill="#4a9ad8"/><path d="M3 16L16 10V16z" fill="#3f86c0"/><path d="M0 3l11 4M0 6l10 3.500M0 9l8 3" stroke="#aeb6be" stroke-width="0.800"/><path d="M0 1l12 4c3 1 3 5 0 5.500L0 6" fill="none" stroke="#c9cfd5" stroke-width="0.700"/><ellipse cx="12.500" cy="8" rx="2.300" ry="2.900" fill="#f6f8fa" stroke="#9098a0" stroke-width="0.700"/><ellipse cx="12.800" cy="8.200" rx="1" ry="1.400" fill="#a8b0b8"/><path d="M0 12l7 2.500 9-4.500" stroke="#d0e4f4" stroke-width="0.700" fill="none"/></svg>
<svg style="left:9px;top:555px" width="16" height="16" viewBox="0 0 16 16"><rect x="0.500" y="0.500" width="15" height="15" fill="#e8eef8" stroke="#0a3a9a" stroke-width="1.200"/><rect x="1" y="1" width="3.500" height="14" fill="#2058c0"/><path d="M3 2.500h1M3 5h1M3 7.500h1M3 10h1M3 12.500h1" stroke="#ffe000" stroke-width="1.400"/><rect x="7" y="2.500" width="2.500" height="2.500" fill="#e8e040" stroke="#204080" stroke-width="0.700"/><rect x="11" y="2.500" width="2.500" height="2.500" fill="#e8e040" stroke="#204080" stroke-width="0.700"/><rect x="7" y="6.500" width="2.500" height="2.500" fill="#60d0c0" stroke="#204080" stroke-width="0.700"/><rect x="11" y="6.500" width="2.500" height="2.500" fill="#e8e040" stroke="#204080" stroke-width="0.700"/><rect x="9.500" y="10.500" width="3.500" height="3.500" fill="#fff060" stroke="#b0a020" stroke-width="0.700"/></svg>
<div class="t" style="left:17px;top:335px;width:0;height:0"><div style="position:absolute;white-space:nowrap;transform:translate(-50%,-50%) rotate(-90deg);font-weight:bold;font-size:13px;letter-spacing:0.3px">시트 세트 관리자</div></div>
<div class="t" style="left:17px;top:783px;width:0;height:0"><div style="position:absolute;white-space:nowrap;transform:translate(-50%,-50%) rotate(-90deg);font-weight:bold;font-size:12px;letter-spacing:0.6px">DESIGNCENTER</div></div>
<div class="a" style="left:32px;top:102px;width:226px;height:891px;background:#edebe8"></div>
<div class="a" style="left:258px;top:102px;width:1px;height:891px;background:#fff"></div>
<div class="a" style="left:259px;top:102px;width:4px;height:891px;background:#d4d0c8"></div>
<div class="a" style="left:263px;top:102px;width:1px;height:891px;background:#404040"></div>
<div class="a" style="left:264px;top:102px;width:1px;height:891px;background:#404040"></div>
<div class="a" style="left:32px;top:647px;width:231px;height:1px;background:#fff"></div>
<div class="a" style="left:32px;top:648px;width:231px;height:2px;background:#404040"></div>
<div class="btn" style="left:39px;top:106px;width:12px;height:12px;"><div class="a" style="left:2px;top:4px;width:6px;height:2px;background:#000"></div></div><div class="a" style="left:53px;top:110px;width:182px;height:2px;border-top:1px solid #fff;border-bottom:1px solid #808080;border-right:1px solid #808080"></div><div class="a" style="left:53px;top:113px;width:182px;height:2px;border-top:1px solid #fff;border-bottom:1px solid #808080;border-right:1px solid #808080"></div><div class="btn" style="left:238px;top:106px;width:12px;height:11px;"><svg style="left:1px;top:1px" width="8" height="7" viewBox="0 0 8 7" shape-rendering="crispEdges"><path d="M1 0.500l6 6M7 0.500l-6 6" stroke="#000" stroke-width="1.500" fill="none"/></svg></div>
<div class="combo" style="left:53px;top:126px;width:113px;height:22px;background:#fff"><div class="t" style="left:4px;top:1px">뷰포트</div><div class="cbtn"><div class="arr" style="left:3px;top:6px;border-top-color:#000"></div></div></div>
<div class="a" style="left:174px;top:124px;width:24px;height:25px;border:1px solid #c9c5bd;background:#edebe8"></div>
<div class="a" style="left:197px;top:124px;width:25px;height:25px;border:1px solid #c9c5bd;background:#edebe8"></div>
<div class="a" style="left:221px;top:124px;width:25px;height:25px;border:1px solid #c9c5bd;background:#edebe8"></div>
<svg style="left:178px;top:128px" width="16" height="16" viewBox="0 0 16 16"><rect x="1.500" y="1.500" width="13" height="13" fill="none" stroke="#000" stroke-dasharray="1 1"/><rect x="4" y="4" width="8" height="8" fill="#dce8f8"/><path d="M8 4.500v7M4.500 8h7" stroke="#1c5cb8" stroke-width="2"/><circle cx="2" cy="4" r="1" fill="#fff" stroke="#707070" stroke-width="0.500"/><circle cx="12.500" cy="13.500" r="1" fill="#fff" stroke="#707070" stroke-width="0.500"/></svg>
<svg style="left:202px;top:128px" width="16" height="16" viewBox="0 0 16 16"><rect x="1.500" y="1.500" width="9" height="11" fill="url(#gp)" stroke="#17387c" stroke-width="1.200"/><path d="M5 2.500l5 5M10 2.500l-5 5" stroke="#e02020" stroke-width="1.500"/><path d="M9 6l5 5.500-2.200 0.200 1.500 3-1.500 0.800-1.500-3-1.500 1.500z" fill="#f8f080" stroke="#17387c" stroke-width="0.800"/></svg>
<svg style="left:226px;top:128px" width="16" height="16" viewBox="0 0 16 16"><ellipse cx="5.500" cy="3" rx="5" ry="2" fill="#3870b0" stroke="#6898d0" stroke-width="0.600"/><path d="M0.500 3.500c1 3 3 3.500 3.500 6v4.500h3V9.500c0.500-2.500 2.500-3 3.500-6z" fill="url(#gb)"/><ellipse cx="5.500" cy="3" rx="3" ry="1" fill="#1c3c70"/><path d="M13 5l2 1-2.500 3.500 2.500 0.500-6 5.500 1.500-4.500-2-0.500z" fill="#f0e020" stroke="#a0a000" stroke-width="0.500"/></svg>
<div class="a" style="left:49px;top:159px;width:196px;height:16px;background:#c6c2b9;border-radius:7px 7px 0 0 / 5px 5px 0 0"></div><div class="t" style="left:56px;top:160px;color:#fff;font-weight:bold;font-size:13px">일반</div><svg style="left:228px;top:162px" width="10" height="11" viewBox="0 0 10 11"><path d="M1 5l4-4 4 4M1 10l4-4 4 4" stroke="#fff" stroke-width="1.300" fill="none"/></svg><div class="a" style="left:66px;top:175px;width:180px;height:17px;border:1px solid #c9c5bd;background:#edebe8"></div><div class="a" style="left:137px;top:175px;width:109px;height:17px;border:1px solid #c9c5bd;background:#fff"></div><div class="t" style="left:69px;top:175px;">색상</div><div class="t" style="left:139px;top:175px;width:105px;overflow:hidden"><span style="display:inline-block;width:10px;height:10px;border:1px solid #000;background:#fff;vertical-align:-1px;margin:0 6px 0 2px"></span>ByLayer</div><div class="a" style="left:66px;top:191px;width:180px;height:17px;border:1px solid #c9c5bd;background:#edebe8"></div><div class="a" style="left:137px;top:191px;width:109px;height:17px;border:1px solid #c9c5bd;background:#fff"></div><div class="t" style="left:69px;top:191px;">도면층</div><div class="t" style="left:139px;top:191px;width:105px;overflow:hidden">out</div><div class="a" style="left:66px;top:207px;width:180px;height:17px;border:1px solid #c9c5bd;background:#edebe8"></div><div class="a" style="left:137px;top:207px;width:109px;height:17px;border:1px solid #c9c5bd;background:#fff"></div><div class="t" style="left:69px;top:207px;">선종류</div><div class="t" style="left:139px;top:207px;width:105px;overflow:hidden"><span style="display:inline-block;width:44px;height:1px;background:#000;vertical-align:4px;margin:0 5px 0 3px"></span>ByLayer</div><div class="a" style="left:66px;top:223px;width:180px;height:17px;border:1px solid #c9c5bd;background:#edebe8"></div><div class="a" style="left:137px;top:223px;width:109px;height:17px;border:1px solid #c9c5bd;background:#fff"></div><div class="t" style="left:69px;top:223px;">선종류 축척</div><div class="t" style="left:139px;top:223px;width:105px;overflow:hidden">1</div><div class="a" style="left:66px;top:239px;width:180px;height:17px;border:1px solid #c9c5bd;background:#edebe8"></div><div class="a" style="left:137px;top:239px;width:109px;height:17px;border:1px solid #c9c5bd;background:#edebe8"></div><div class="t" style="left:69px;top:239px;">플롯 스타일</div><div class="t" style="left:139px;top:239px;width:105px;overflow:hidden">ByColor</div><div class="a" style="left:66px;top:255px;width:180px;height:17px;border:1px solid #c9c5bd;background:#edebe8"></div><div class="a" style="left:137px;top:255px;width:109px;height:17px;border:1px solid #c9c5bd;background:#fff"></div><div class="t" style="left:69px;top:255px;">선가중치</div><div class="t" style="left:139px;top:255px;width:105px;overflow:hidden"><span style="display:inline-block;width:44px;height:1px;background:#000;vertical-align:4px;margin:0 5px 0 3px"></span>ByLayer</div><div class="a" style="left:66px;top:271px;width:180px;height:17px;border:1px solid #c9c5bd;background:#edebe8"></div><div class="a" style="left:137px;top:271px;width:109px;height:17px;border:1px solid #c9c5bd;background:#fff"></div><div class="t" style="left:69px;top:271px;">하이퍼링크</div><div class="t" style="left:139px;top:271px;width:105px;overflow:hidden"></div>
<div class="a" style="left:49px;top:295px;width:196px;height:16px;background:#c6c2b9;border-radius:7px 7px 0 0 / 5px 5px 0 0"></div><div class="t" style="left:56px;top:296px;color:#fff;font-weight:bold;font-size:13px">형상</div><svg style="left:228px;top:298px" width="10" height="11" viewBox="0 0 10 11"><path d="M1 5l4-4 4 4M1 10l4-4 4 4" stroke="#fff" stroke-width="1.300" fill="none"/></svg><div class="a" style="left:66px;top:311px;width:180px;height:17px;border:1px solid #c9c5bd;background:#edebe8"></div><div class="a" style="left:137px;top:311px;width:109px;height:17px;border:1px solid #c9c5bd;background:#fff"></div><div class="t" style="left:69px;top:311px;">X 중심</div><div class="t" style="left:139px;top:311px;width:105px;overflow:hidden">385</div><div class="a" style="left:66px;top:327px;width:180px;height:17px;border:1px solid #c9c5bd;background:#edebe8"></div><div class="a" style="left:137px;top:327px;width:109px;height:17px;border:1px solid #c9c5bd;background:#fff"></div><div class="t" style="left:69px;top:327px;">Y 중심</div><div class="t" style="left:139px;top:327px;width:105px;overflow:hidden">297</div><div class="a" style="left:66px;top:343px;width:180px;height:17px;border:1px solid #c9c5bd;background:#edebe8"></div><div class="a" style="left:137px;top:343px;width:109px;height:17px;border:1px solid #c9c5bd;background:#fff"></div><div class="t" style="left:69px;top:343px;">Z 중심</div><div class="t" style="left:139px;top:343px;width:105px;overflow:hidden">0</div><div class="a" style="left:66px;top:359px;width:180px;height:17px;border:1px solid #c9c5bd;background:#edebe8"></div><div class="a" style="left:137px;top:359px;width:109px;height:17px;border:1px solid #c9c5bd;background:#fff"></div><div class="t" style="left:69px;top:359px;">높이</div><div class="t" style="left:139px;top:359px;width:105px;overflow:hidden">552</div><div class="a" style="left:66px;top:375px;width:180px;height:17px;border:1px solid #c9c5bd;background:#edebe8"></div><div class="a" style="left:137px;top:375px;width:109px;height:17px;border:1px solid #c9c5bd;background:#fff"></div><div class="t" style="left:69px;top:375px;">폭</div><div class="t" style="left:139px;top:375px;width:105px;overflow:hidden">697</div>
<div class="a" style="left:49px;top:399px;width:196px;height:16px;background:#c6c2b9;border-radius:7px 7px 0 0 / 5px 5px 0 0"></div><div class="t" style="left:56px;top:400px;color:#fff;font-weight:bold;font-size:13px">기타</div><svg style="left:228px;top:402px" width="10" height="11" viewBox="0 0 10 11"><path d="M1 5l4-4 4 4M1 10l4-4 4 4" stroke="#fff" stroke-width="1.300" fill="none"/></svg><div class="a" style="left:66px;top:415px;width:180px;height:17px;border:1px solid #c9c5bd;background:#edebe8"></div><div class="a" style="left:137px;top:415px;width:109px;height:17px;border:1px solid #c9c5bd;background:#fff"></div><div class="t" style="left:69px;top:415px;">켜기</div><div class="t" style="left:139px;top:415px;width:105px;overflow:hidden">예</div><div class="a" style="left:66px;top:431px;width:180px;height:17px;border:1px solid #c9c5bd;background:#edebe8"></div><div class="a" style="left:137px;top:431px;width:109px;height:17px;border:1px solid #c9c5bd;background:#edebe8"></div><div class="t" style="left:69px;top:431px;">잘림</div><div class="t" style="left:139px;top:431px;width:105px;overflow:hidden">아니오</div><div class="a" style="left:66px;top:447px;width:180px;height:17px;border:1px solid #c9c5bd;background:#edebe8"></div><div class="a" style="left:137px;top:447px;width:109px;height:17px;border:1px solid #c9c5bd;background:#fff"></div><div class="t" style="left:69px;top:447px;">화면표시...</div><div class="t" style="left:139px;top:447px;width:105px;overflow:hidden">예</div><div class="a" style="left:66px;top:463px;width:180px;height:17px;border:1px solid #c9c5bd;background:#edebe8"></div><div class="a" style="left:137px;top:463px;width:109px;height:17px;border:1px solid #c9c5bd;background:#edebe8"></div><div class="t" style="left:69px;top:463px;">주석 축척</div><div class="t" style="left:139px;top:463px;width:105px;overflow:hidden">1:1</div><div class="a" style="left:66px;top:479px;width:180px;height:17px;border:1px solid #c9c5bd;background:#edebe8"></div><div class="a" style="left:137px;top:479px;width:109px;height:17px;border:1px solid #c9c5bd;background:#edebe8"></div><div class="t" style="left:69px;top:479px;">표준 축척</div><div class="t" style="left:139px;top:479px;width:105px;overflow:hidden">사용자</div><div class="a" style="left:66px;top:495px;width:180px;height:17px;border:1px solid #c9c5bd;background:#edebe8"></div><div class="a" style="left:137px;top:495px;width:109px;height:17px;border:1px solid #c9c5bd;background:#edebe8"></div><div class="t" style="left:69px;top:495px;">사용자 축척</div><div class="t" style="left:139px;top:495px;width:105px;overflow:hidden">0,01</div><div class="a" style="left:66px;top:511px;width:180px;height:17px;border:1px solid #c9c5bd;background:#edebe8"></div><div class="a" style="left:137px;top:511px;width:109px;height:17px;border:1px solid #c9c5bd;background:#edebe8"></div><div class="t" style="left:69px;top:511px;">뷰포트 당...</div><div class="t" style="left:139px;top:511px;width:105px;overflow:hidden">예</div><div class="a" style="left:66px;top:527px;width:180px;height:17px;border:1px solid #c9c5bd;background:#edebe8"></div><div class="a" style="left:137px;top:527px;width:109px;height:17px;border:1px solid #c9c5bd;background:#edebe8"></div><div class="t" style="left:69px;top:527px;">도면층 특...</div><div class="t" style="left:139px;top:527px;width:105px;overflow:hidden">아니오</div><div class="a" style="left:66px;top:543px;width:180px;height:17px;border:1px solid #c9c5bd;background:#edebe8"></div><div class="a" style="left:137px;top:543px;width:109px;height:17px;border:1px solid #c9c5bd;background:#edebe8"></div><div class="t" style="left:69px;top:543px;">뷰 스타일</div><div class="t" style="left:139px;top:543px;width:105px;overflow:hidden">2D 와이어프레임</div><div class="a" style="left:66px;top:559px;width:180px;height:17px;border:1px solid #c9c5bd;background:#edebe8"></div><div class="a" style="left:137px;top:559px;width:109px;height:17px;border:1px solid #c9c5bd;background:#fff"></div><div class="t" style="left:69px;top:559px;">음영 플롯</div><div class="t" style="left:139px;top:559px;width:105px;overflow:hidden">표시</div><div class="a" style="left:66px;top:575px;width:180px;height:17px;border:1px solid #c9c5bd;background:#edebe8"></div><div class="a" style="left:137px;top:575px;width:109px;height:17px;border:1px solid #c9c5bd;background:#edebe8"></div><div class="t" style="left:69px;top:575px;">시트 뷰로...</div><div class="t" style="left:139px;top:575px;width:105px;overflow:hidden">아니오</div>
<div class="a" style="left:50px;top:601px;width:196px;height:31px;border:1px solid #c9c5bd;background:#edebe8"></div>
<div class="btn" style="left:39px;top:656px;width:12px;height:12px;"><div class="a" style="left:2px;top:4px;width:6px;height:2px;background:#000"></div></div><div class="a" style="left:53px;top:660px;width:182px;height:2px;border-top:1px solid #fff;border-bottom:1px solid #808080;border-right:1px solid #808080"></div><div class="a" style="left:53px;top:663px;width:182px;height:2px;border-top:1px solid #fff;border-bottom:1px solid #808080;border-right:1px solid #808080"></div><div class="btn" style="left:238px;top:656px;width:12px;height:11px;"><svg style="left:1px;top:1px" width="8" height="7" viewBox="0 0 8 7" shape-rendering="crispEdges"><path d="M1 0.500l6 6M7 0.500l-6 6" stroke="#000" stroke-width="1.500" fill="none"/></svg></div>
<div class="a" style="left:41px;top:675px;width:91px;height:25px;border:1px solid #c9c5bd;background:#edebe8"></div>
<div class="a" style="left:74px;top:675px;width:1px;height:25px;background:#c9c5bd"></div>
<div class="a" style="left:107px;top:675px;width:1px;height:25px;background:#c9c5bd"></div>
<svg style="left:46px;top:679px" width="16" height="16" viewBox="0 0 16 16"><path d="M0.500 3.500h11l4 4v8h-15z" fill="url(#gp)" stroke="#0a3a8a" stroke-width="1.300"/><path d="M11.500 3.500v4h4" fill="#fff" stroke="#0a3a8a" stroke-width="1"/><path d="M3 2v5a1 1 0 0 0 2 0V1.500a1.300 1.300 0 0 0-2.600 0" fill="none" stroke="#000" stroke-width="1.100"/></svg>
<svg style="left:79px;top:679px" width="16" height="16" viewBox="0 0 16 16"><path d="M1.500 1.500h8l3 3v10.500h-11z" fill="#dceefc" stroke="#8080e0" stroke-width="1" stroke-dasharray="2 1"/><path d="M4 7c0-3 5-3 5-1h2l-3 3-3-3h2c0-1-2-1-2 1zM10 10c0 3-5 3-5 1H3l3-3 3 3H7c0 1 2 1 2-1z" fill="#10a010"/></svg>
<svg style="left:112px;top:680px" width="16" height="16" viewBox="0 0 16 16"><rect x="0.500" y="0.500" width="15" height="15" rx="3" fill="url(#gb)" stroke="#c8d8f0" stroke-width="0.800"/><path d="M5 6c0-4 6.500-4 6.500 0 0 2-3 2.500-3 4.500" fill="none" stroke="#fff" stroke-width="2.200"/><rect x="7.200" y="12" width="2.400" height="2.400" fill="#fff"/></svg>
<div class="a" style="left:63px;top:678px;width:1px;height:19px;background:#c9c5bd"></div>
<div class="a" style="left:96px;top:678px;width:1px;height:19px;background:#c9c5bd"></div>
<div class="arr" style="left:65px;top:686px;border-left-width:3px;border-right-width:3px;border-top-width:3px;border-top-color:#606060"></div>
<div class="arr" style="left:98px;top:686px;border-left-width:3px;border-right-width:3px;border-top-width:3px;border-top-color:#606060"></div>
<div class="a" style="left:42px;top:711px;width:206px;height:18px;background:#c6c2b9;border-radius:7px 7px 0 0 / 5px 5px 0 0"></div><div class="t" style="left:52px;top:711px;color:#fff;font-weight:bold;font-size:13px">파일 참조</div>
<svg style="left:213px;top:714px" width="16" height="13" viewBox="0 0 16 13"><rect x="0.500" y="0.500" width="14" height="12" fill="#e8f0fc" stroke="#1c50a8" stroke-width="1"/><rect x="1.500" y="1.500" width="12" height="10" fill="none" stroke="#fff" stroke-width="1"/><path d="M3.500 4.500h3M8.500 4.500h3M3.500 6.500h3M8.500 6.500h3M3.500 8.500h3M8.500 8.500h3" stroke="#305898" stroke-width="1"/></svg>
<svg style="left:230px;top:714px" width="16" height="13" viewBox="0 0 16 13"><rect x="0.500" y="0.500" width="13" height="12" fill="#e8f0fc" stroke="#1c50a8" stroke-width="1"/><rect x="1.500" y="1.500" width="11" height="10" fill="none" stroke="#fff" stroke-width="1"/><rect x="3.500" y="3.500" width="2" height="2" fill="#fff" stroke="#305898" stroke-width="0.800"/><path d="M4.500 5.500v3.500h2.500" stroke="#305898" stroke-width="0.800" fill="none"/><rect x="7.500" y="7.500" width="3" height="2.500" fill="#80a0d0" stroke="#305898" stroke-width="0.800"/></svg>
<div class="a" style="left:42px;top:729px;width:206px;height:15px;background:#d4d0c8"></div>
<div class="raised1 a" style="left:42px;top:729px;width:18px;height:15px;"></div>
<div class="raised1 a" style="left:60px;top:729px;width:130px;height:15px;"></div>
<div class="a" style="left:190px;top:729px;width:58px;height:15px;border:1px solid;border-color:#fff #d4d0c8 #808080 #fff"></div>
<div class="t" style="left:66px;top:730px;">참조 이름</div>
<div class="t" style="left:197px;top:730px;">상태</div>
<div class="a" style="left:126px;top:734px;width:0;height:0;border-left:4px solid transparent;border-right:4px solid transparent;border-bottom:4px solid #808080"></div>
<div class="a" style="left:42px;top:744px;width:206px;height:108px;background:#fff"></div>
<svg style="left:42px;top:744px" width="16" height="16" viewBox="0 0 16 16"><path d="M1.500 1h9.500l4 4v8H1.500z" fill="#3c6ea8"/><path d="M11 1l4 4h-4z" fill="#b5cde8"/><path d="M0.500 8l14.500 5v2.500H0.500z" fill="#f4c800"/><path d="M0.500 14.500h14.500v1.500H0.500z" fill="#c99700"/><path d="M4.500 0v7M1 3.500h7.500" stroke="#fff" stroke-width="1"/><circle cx="4.500" cy="3.500" r="1.500" fill="#3c6ea8" stroke="#fff"/></svg>
<div class="t" style="left:66px;top:745px;">A3-01 입면도-1*</div>
<div class="t" style="left:215px;top:745px;width:33px;overflow:hidden">열림</div>
<svg style="left:42px;top:761px" width="16" height="16" viewBox="0 0 16 16"><path d="M0.500 2.500h11l4 4v9h-15z" fill="url(#gp)" stroke="#0a3a8a" stroke-width="1.200"/><path d="M11.500 2.500v4h4" fill="#fff" stroke="#0a3a8a" stroke-width="1"/><path d="M3 2v4a1 1 0 0 0 2 0V1.500a1.300 1.300 0 0 0-2.600 0" fill="none" stroke="#000" stroke-width="1"/></svg>
<div class="t" style="left:66px;top:762px;">XR-ELE1</div>
<div class="t" style="left:215px;top:762px;width:33px;overflow:hidden">로드됨</div>
<svg style="left:42px;top:778px" width="16" height="16" viewBox="0 0 16 16"><path d="M0.500 2.500h11l4 4v9h-15z" fill="url(#gp)" stroke="#0a3a8a" stroke-width="1.200"/><path d="M11.500 2.500v4h4" fill="#fff" stroke="#0a3a8a" stroke-width="1"/><path d="M3 2v4a1 1 0 0 0 2 0V1.500a1.300 1.300 0 0 0-2.600 0" fill="none" stroke="#000" stroke-width="1"/></svg>
<div class="t" style="left:66px;top:779px;">XR-SHT</div>
<div class="t" style="left:215px;top:779px;width:33px;overflow:hidden">로드됨</div>
<div class="a" style="left:42px;top:852px;width:206px;height:16px;background:repeating-conic-gradient(#fff 0 25%,#d4d0c8 0 50%) 0 0/2px 2px"></div><div class="btn" style="left:42px;top:852px;width:16px;height:16px;"><div class="a" style="left:4px;top:3px;width:0;height:0;border-top:4px solid transparent;border-bottom:4px solid transparent;border-right:4px solid #000"></div></div><div class="btn" style="left:232px;top:852px;width:16px;height:16px;"><div class="a" style="left:5px;top:3px;width:0;height:0;border-top:4px solid transparent;border-bottom:4px solid transparent;border-left:4px solid #000"></div></div><div class="btn" style="left:58px;top:852px;width:43px;height:16px;"></div>
<svg style="left:140px;top:870px" width="9" height="11" viewBox="0 0 9 11"><path d="M0.500 4.500l4-4 4 4zM0.500 6.500l4 4 4-4z" fill="#c0bcb2"/></svg>
<div class="a" style="left:42px;top:881px;width:206px;height:18px;background:#c6c2b9;border-radius:7px 7px 0 0 / 5px 5px 0 0"></div><div class="t" style="left:52px;top:881px;color:#fff;font-weight:bold;font-size:13px">상세 정보</div>
<svg style="left:193px;top:884px" width="16" height="13" viewBox="0 0 16 13"><rect x="0.500" y="0.500" width="14" height="12" fill="#e8f0fc" stroke="#1c50a8" stroke-width="1"/><rect x="1.500" y="1.500" width="12" height="10" fill="none" stroke="#fff" stroke-width="1"/><path d="M4 4.500h7M4 6.500h7M4 8.500h7" stroke="#305898" stroke-width="1"/></svg>
<svg style="left:210px;top:884px" width="16" height="13" viewBox="0 0 16 13"><rect x="0.500" y="0.500" width="14" height="12" fill="#d8ecd8" stroke="#208878" stroke-width="1"/><rect x="3" y="2.500" width="8" height="8" fill="#fff" stroke="#808080" stroke-width="0.600"/><circle cx="8" cy="6" r="2.800" fill="#e0ecf8" stroke="#505050" stroke-width="0.900"/><path d="M6 8l-3.500 3.500" stroke="#b03010" stroke-width="1.400"/></svg>
<svg style="left:231px;top:886px" width="10" height="11" viewBox="0 0 10 11"><path d="M1 5l4-4 4 4M1 10l4-4 4 4" stroke="#fff" stroke-width="1.300" fill="none"/></svg>
<div class="a" style="left:42px;top:899px;width:206px;height:34px;background:#f0efed;border:1px solid #c9c5bd;border-top:1px solid #fff;border-bottom:none"></div>
<div class="a" style="left:42px;top:916px;width:206px;height:1px;background:#c9c5bd"></div>
<div class="a" style="left:122px;top:899px;width:1px;height:34px;background:#c9c5bd"></div>
<div class="a" style="left:42px;top:933px;width:206px;height:16px;background:repeating-conic-gradient(#fff 0 25%,#d4d0c8 0 50%) 0 0/2px 2px"></div><div class="btn" style="left:42px;top:933px;width:16px;height:16px;"><div class="a" style="left:4px;top:3px;width:0;height:0;border-top:4px solid transparent;border-bottom:4px solid transparent;border-right:4px solid #000"></div></div><div class="btn" style="left:232px;top:933px;width:16px;height:16px;"><div class="a" style="left:5px;top:3px;width:0;height:0;border-top:4px solid transparent;border-bottom:4px solid transparent;border-left:4px solid #000"></div></div><div class="btn" style="left:58px;top:933px;width:95px;height:16px;"></div>
<div class="a" style="left:265px;top:101px;width:1127px;height:801px;background:#000"></div>
<svg style="left:0;top:0" width="1400" height="1022" viewBox="0 0 1400 1022" shape-rendering="crispEdges" fill="none"><rect x="458.5" y="156.5" width="817" height="577" fill="none" stroke="#0000ff" /><path d="M467.5 168.5H1266.5" stroke="#fff" stroke-width="1" fill="none" stroke-dasharray="16 9" stroke-dashoffset="8.5"/><path d="M467.5 722.5H1266.5" stroke="#fff" stroke-width="1" fill="none" stroke-dasharray="16 9" stroke-dashoffset="8.5"/><path d="M467.5 168.5V722.5" stroke="#fff" stroke-width="1" fill="none" stroke-dasharray="16 9" stroke-dashoffset="7.5"/><path d="M1266.5 168.5V722.5" stroke="#fff" stroke-width="1" fill="none" stroke-dasharray="16 9" stroke-dashoffset="7.5"/><path d="M526 317.5H561" stroke="#ff00ff" stroke-width="1" /><path d="M526.5 317.5l4-4 4 4-4 4zM530.5 313v9" stroke="#ff00ff" stroke-width="1" fill="none" /><rect x="535" y="313" width="15" height="5" fill="#00ff00" stroke="none" /><rect x="535" y="318" width="18" height="4" fill="#00ff00" stroke="none" /><path d="M526 343.5H561" stroke="#ff00ff" stroke-width="1" /><path d="M526.5 343.5l4-4 4 4-4 4zM530.5 339v9" stroke="#ff00ff" stroke-width="1" fill="none" /><rect x="535" y="339" width="13" height="5" fill="#00ff00" stroke="none" /><rect x="535" y="344" width="18" height="4" fill="#00ff00" stroke="none" /><path d="M526 365.5H561" stroke="#ff00ff" stroke-width="1" /><path d="M526.5 365.5l4-4 4 4-4 4zM530.5 361v9" stroke="#ff00ff" stroke-width="1" fill="none" /><rect x="535" y="361" width="15" height="5" fill="#00ff00" stroke="none" /><rect x="535" y="366" width="18" height="4" fill="#00ff00" stroke="none" /><path d="M526 385.5H561" stroke="#ff00ff" stroke-width="1" /><path d="M526.5 385.5l4-4 4 4-4 4zM530.5 381v9" stroke="#ff00ff" stroke-width="1" fill="none" /><rect x="535" y="381" width="15" height="5" fill="#00ff00" stroke="none" /><rect x="535" y="386" width="18" height="4" fill="#00ff00" stroke="none" /><path d="M526 404.5H561" stroke="#ff00ff" stroke-width="1" /><path d="M526.5 404.5l4-4 4 4-4 4zM530.5 400v9" stroke="#ff00ff" stroke-width="1" fill="none" /><rect x="535" y="400" width="12" height="5" fill="#00ff00" stroke="none" /><rect x="535" y="405" width="18" height="4" fill="#00ff00" stroke="none" /><path d="M526 424.5H561" stroke="#ff00ff" stroke-width="1" /><path d="M526.5 424.5l4-4 4 4-4 4zM530.5 420v9" stroke="#ff00ff" stroke-width="1" fill="none" /><rect x="535" y="420" width="12" height="5" fill="#00ff00" stroke="none" /><rect x="535" y="425" width="18" height="4" fill="#00ff00" stroke="none" /><path d="M526 443.5H561" stroke="#ff00ff" stroke-width="1" /><path d="M526.5 443.5l4-4 4 4-4 4zM530.5 439v9" stroke="#ff00ff" stroke-width="1" fill="none" /><rect x="535" y="439" width="13" height="5" fill="#00ff00" stroke="none" /><rect x="535" y="444" width="18" height="4" fill="#00ff00" stroke="none" /><path d="M526 463.5H561" stroke="#ff00ff" stroke-width="1" /><path d="M526.5 463.5l4-4 4 4-4 4zM530.5 459v9" stroke="#ff00ff" stroke-width="1" fill="none" /><rect x="535" y="459" width="13" height="5" fill="#00ff00" stroke="none" /><rect x="535" y="464" width="18" height="4" fill="#00ff00" stroke="none" /><path d="M526 482.5H561" stroke="#ff00ff" stroke-width="1" /><path d="M526.5 482.5l4-4 4 4-4 4zM530.5 478v9" stroke="#ff00ff" stroke-width="1" fill="none" /><rect x="535" y="478" width="14" height="5" fill="#00ff00" stroke="none" /><rect x="535" y="483" width="18" height="4" fill="#00ff00" stroke="none" /><path d="M526 501.5H561" stroke="#ff00ff" stroke-width="1" /><path d="M526.5 501.5l4-4 4 4-4 4zM530.5 497v9" stroke="#ff00ff" stroke-width="1" fill="none" /><rect x="535" y="497" width="15" height="5" fill="#00ff00" stroke="none" /><rect x="535" y="502" width="18" height="4" fill="#00ff00" stroke="none" /><path d="M526 521.5H561" stroke="#ff00ff" stroke-width="1" /><path d="M526.5 521.5l4-4 4 4-4 4zM530.5 517v9" stroke="#ff00ff" stroke-width="1" fill="none" /><rect x="535" y="517" width="15" height="5" fill="#00ff00" stroke="none" /><rect x="535" y="522" width="18" height="4" fill="#00ff00" stroke="none" /><path d="M526 540.5H561" stroke="#ff00ff" stroke-width="1" /><path d="M526.5 540.5l4-4 4 4-4 4zM530.5 536v9" stroke="#ff00ff" stroke-width="1" fill="none" /><rect x="535" y="536" width="12" height="5" fill="#00ff00" stroke="none" /><rect x="535" y="541" width="18" height="4" fill="#00ff00" stroke="none" /><path d="M526 560.5H561" stroke="#ff00ff" stroke-width="1" /><path d="M526.5 560.5l4-4 4 4-4 4zM530.5 556v9" stroke="#ff00ff" stroke-width="1" fill="none" /><rect x="535" y="556" width="12" height="5" fill="#00ff00" stroke="none" /><rect x="535" y="561" width="18" height="4" fill="#00ff00" stroke="none" /><path d="M526 579.5H561" stroke="#ff00ff" stroke-width="1" /><path d="M526.5 579.5l4-4 4 4-4 4zM530.5 575v9" stroke="#ff00ff" stroke-width="1" fill="none" /><rect x="535" y="575" width="13" height="5" fill="#00ff00" stroke="none" /><rect x="535" y="580" width="18" height="4" fill="#00ff00" stroke="none" /><path d="M526 599.5H561" stroke="#ff00ff" stroke-width="1" /><path d="M526.5 599.5l4-4 4 4-4 4zM530.5 595v9" stroke="#ff00ff" stroke-width="1" fill="none" /><rect x="535" y="595" width="13" height="5" fill="#00ff00" stroke="none" /><rect x="535" y="600" width="18" height="4" fill="#00ff00" stroke="none" /><path d="M526 618.5H561" stroke="#ff00ff" stroke-width="1" /><path d="M526.5 618.5l4-4 4 4-4 4zM530.5 614v9" stroke="#ff00ff" stroke-width="1" fill="none" /><rect x="535" y="614" width="14" height="5" fill="#00ff00" stroke="none" /><rect x="535" y="619" width="18" height="4" fill="#00ff00" stroke="none" /><path d="M526 643.5H561" stroke="#ff00ff" stroke-width="1" /><path d="M526.5 643.5l4-4 4 4-4 4zM530.5 639v9" stroke="#ff00ff" stroke-width="1" fill="none" /><rect x="535" y="639" width="13" height="5" fill="#00ff00" stroke="none" /><rect x="535" y="644" width="18" height="4" fill="#00ff00" stroke="none" /><path d="M568.5 317V643" stroke="#ffffff" stroke-width="1" /><path d="M577.5 317V643" stroke="#ffffff" stroke-width="1" /><path d="M568 317.5H586" stroke="#ffffff" stroke-width="1" /><path d="M576 343.5H586" stroke="#ffffff" stroke-width="1" /><path d="M576 365.5H586" stroke="#ffffff" stroke-width="1" /><path d="M576 385.5H586" stroke="#ffffff" stroke-width="1" /><path d="M576 404.5H586" stroke="#ffffff" stroke-width="1" /><path d="M576 424.5H586" stroke="#ffffff" stroke-width="1" /><path d="M576 443.5H586" stroke="#ffffff" stroke-width="1" /><path d="M576 463.5H586" stroke="#ffffff" stroke-width="1" /><path d="M576 482.5H586" stroke="#ffffff" stroke-width="1" /><path d="M576 501.5H586" stroke="#ffffff" stroke-width="1" /><path d="M576 521.5H586" stroke="#ffffff" stroke-width="1" /><path d="M576 540.5H586" stroke="#ffffff" stroke-width="1" /><path d="M576 560.5H586" stroke="#ffffff" stroke-width="1" /><path d="M576 579.5H586" stroke="#ffffff" stroke-width="1" /><path d="M576 599.5H586" stroke="#ffffff" stroke-width="1" /><path d="M576 618.5H586" stroke="#ffffff" stroke-width="1" /><path d="M568 643.5H588" stroke="#ffffff" stroke-width="1" /><rect x="573" y="326" width="4" height="7" fill="#00ff00" stroke="none" /><rect x="573" y="350" width="4" height="7" fill="#00ff00" stroke="none" /><rect x="573" y="372" width="4" height="7" fill="#00ff00" stroke="none" /><rect x="573" y="391" width="4" height="7" fill="#00ff00" stroke="none" /><rect x="573" y="410" width="4" height="7" fill="#00ff00" stroke="none" /><rect x="573" y="430" width="4" height="7" fill="#00ff00" stroke="none" /><rect x="573" y="450" width="4" height="7" fill="#00ff00" stroke="none" /><rect x="573" y="469" width="4" height="7" fill="#00ff00" stroke="none" /><rect x="573" y="488" width="4" height="7" fill="#00ff00" stroke="none" /><rect x="573" y="508" width="4" height="7" fill="#00ff00" stroke="none" /><rect x="573" y="527" width="4" height="7" fill="#00ff00" stroke="none" /><rect x="573" y="546" width="4" height="7" fill="#00ff00" stroke="none" /><rect x="573" y="566" width="4" height="7" fill="#00ff00" stroke="none" /><rect x="573" y="586" width="4" height="7" fill="#00ff00" stroke="none" /><rect x="573" y="605" width="4" height="7" fill="#00ff00" stroke="none" /><rect x="573" y="627" width="4" height="7" fill="#00ff00" stroke="none" /><rect x="565" y="478" width="3" height="9" fill="#00ff00" stroke="none" /><circle cx="643.5" cy="237.5" r="5.500" fill="none" stroke="#ff00ff"/><path d="M643.5 231V233" stroke="#ff00ff" stroke-width="1" /><path d="M643.5 243V246" stroke="#ff00ff" stroke-width="1" /><path d="M637 237.5H639" stroke="#ff00ff" stroke-width="1" /><path d="M648 237.5H650" stroke="#ff00ff" stroke-width="1" /><text x="643.5" y="240.500" font-size="8.500" font-weight="bold" fill="#00ff00" stroke="#00ff00" stroke-width="0.700" text-anchor="middle" font-family="Liberation Sans,sans-serif">F</text><path d="M643.5 250V270" stroke="#ffffff" stroke-width="1" /><circle cx="679.5" cy="237.5" r="5.500" fill="none" stroke="#ff00ff"/><path d="M679.5 231V233" stroke="#ff00ff" stroke-width="1" /><path d="M679.5 243V246" stroke="#ff00ff" stroke-width="1" /><path d="M673 237.5H675" stroke="#ff00ff" stroke-width="1" /><path d="M684 237.5H686" stroke="#ff00ff" stroke-width="1" /><text x="679.5" y="240.500" font-size="8.500" font-weight="bold" fill="#00ff00" stroke="#00ff00" stroke-width="0.700" text-anchor="middle" font-family="Liberation Sans,sans-serif">E</text><path d="M679.5 259V270" stroke="#ffffff" stroke-width="1" /><circle cx="716.5" cy="237.5" r="5.500" fill="none" stroke="#ff00ff"/><path d="M716.5 231V233" stroke="#ff00ff" stroke-width="1" /><path d="M716.5 243V246" stroke="#ff00ff" stroke-width="1" /><path d="M710 237.5H712" stroke="#ff00ff" stroke-width="1" /><path d="M721 237.5H723" stroke="#ff00ff" stroke-width="1" /><text x="716.5" y="240.500" font-size="8.500" font-weight="bold" fill="#00ff00" stroke="#00ff00" stroke-width="0.700" text-anchor="middle" font-family="Liberation Sans,sans-serif">D</text><path d="M716.5 259V270" stroke="#ffffff" stroke-width="1" /><circle cx="752.5" cy="237.5" r="5.500" fill="none" stroke="#ff00ff"/><path d="M752.5 231V233" stroke="#ff00ff" stroke-width="1" /><path d="M752.5 243V246" stroke="#ff00ff" stroke-width="1" /><path d="M746 237.5H748" stroke="#ff00ff" stroke-width="1" /><path d="M757 237.5H759" stroke="#ff00ff" stroke-width="1" /><text x="752.5" y="240.500" font-size="8.500" font-weight="bold" fill="#00ff00" stroke="#00ff00" stroke-width="0.700" text-anchor="middle" font-family="Liberation Sans,sans-serif">C</text><path d="M752.5 259V270" stroke="#ffffff" stroke-width="1" /><circle cx="786.5" cy="237.5" r="5.500" fill="none" stroke="#ff00ff"/><path d="M786.5 231V233" stroke="#ff00ff" stroke-width="1" /><path d="M786.5 243V246" stroke="#ff00ff" stroke-width="1" /><path d="M780 237.5H782" stroke="#ff00ff" stroke-width="1" /><path d="M791 237.5H793" stroke="#ff00ff" stroke-width="1" /><text x="786.5" y="240.500" font-size="8.500" font-weight="bold" fill="#00ff00" stroke="#00ff00" stroke-width="0.700" text-anchor="middle" font-family="Liberation Sans,sans-serif">B</text><path d="M786.5 259V270" stroke="#ffffff" stroke-width="1" /><circle cx="815.5" cy="237.5" r="5.500" fill="none" stroke="#ff00ff"/><path d="M815.5 231V233" stroke="#ff00ff" stroke-width="1" /><path d="M815.5 243V246" stroke="#ff00ff" stroke-width="1" /><path d="M809 237.5H811" stroke="#ff00ff" stroke-width="1" /><path d="M820 237.5H822" stroke="#ff00ff" stroke-width="1" /><text x="815.5" y="240.500" font-size="8.500" font-weight="bold" fill="#00ff00" stroke="#00ff00" stroke-width="0.700" text-anchor="middle" font-family="Liberation Sans,sans-serif">A</text><path d="M815.5 250V270" stroke="#ffffff" stroke-width="1" /><circle cx="970.5" cy="237.5" r="5.500" fill="none" stroke="#ff00ff"/><path d="M970.5 231V233" stroke="#ff00ff" stroke-width="1" /><path d="M970.5 243V246" stroke="#ff00ff" stroke-width="1" /><path d="M964 237.5H966" stroke="#ff00ff" stroke-width="1" /><path d="M975 237.5H977" stroke="#ff00ff" stroke-width="1" /><text x="970.5" y="240.500" font-size="8.500" font-weight="bold" fill="#00ff00" stroke="#00ff00" stroke-width="0.700" text-anchor="middle" font-family="Liberation Sans,sans-serif" textLength="8" lengthAdjust="spacingAndGlyphs">Y4</text><path d="M970.5 250V270" stroke="#ffffff" stroke-width="1" /><circle cx="1007.5" cy="237.5" r="5.500" fill="none" stroke="#ff00ff"/><path d="M1007.5 231V233" stroke="#ff00ff" stroke-width="1" /><path d="M1007.5 243V246" stroke="#ff00ff" stroke-width="1" /><path d="M1001 237.5H1003" stroke="#ff00ff" stroke-width="1" /><path d="M1012 237.5H1014" stroke="#ff00ff" stroke-width="1" /><text x="1007.5" y="240.500" font-size="8.500" font-weight="bold" fill="#00ff00" stroke="#00ff00" stroke-width="0.700" text-anchor="middle" font-family="Liberation Sans,sans-serif" textLength="8" lengthAdjust="spacingAndGlyphs">Y3</text><path d="M1007.5 259V270" stroke="#ffffff" stroke-width="1" /><circle cx="1043.5" cy="237.5" r="5.500" fill="none" stroke="#ff00ff"/><path d="M1043.5 231V233" stroke="#ff00ff" stroke-width="1" /><path d="M1043.5 243V246" stroke="#ff00ff" stroke-width="1" /><path d="M1037 237.5H1039" stroke="#ff00ff" stroke-width="1" /><path d="M1048 237.5H1050" stroke="#ff00ff" stroke-width="1" /><text x="1043.5" y="240.500" font-size="8.500" font-weight="bold" fill="#00ff00" stroke="#00ff00" stroke-width="0.700" text-anchor="middle" font-family="Liberation Sans,sans-serif" textLength="8" lengthAdjust="spacingAndGlyphs">Y2</text><path d="M1043.5 259V270" stroke="#ffffff" stroke-width="1" /><circle cx="1080.5" cy="237.5" r="5.500" fill="none" stroke="#ff00ff"/><path d="M1080.5 231V233" stroke="#ff00ff" stroke-width="1" /><path d="M1080.5 243V246" stroke="#ff00ff" stroke-width="1" /><path d="M1074 237.5H1076" stroke="#ff00ff" stroke-width="1" /><path d="M1085 237.5H1087" stroke="#ff00ff" stroke-width="1" /><text x="1080.5" y="240.500" font-size="8.500" font-weight="bold" fill="#00ff00" stroke="#00ff00" stroke-width="0.700" text-anchor="middle" font-family="Liberation Sans,sans-serif" textLength="8" lengthAdjust="spacingAndGlyphs">Y1</text><path d="M1080.5 250V270" stroke="#ffffff" stroke-width="1" /><path d="M642 251.5H817" stroke="#ffffff" stroke-width="1" /><path d="M642 260.5H817" stroke="#ffffff" stroke-width="1" /><rect x="658" y="257" width="8" height="3" fill="#00ff00" stroke="none" /><rect x="694" y="257" width="8" height="3" fill="#00ff00" stroke="none" /><rect x="730" y="257" width="8" height="3" fill="#00ff00" stroke="none" /><rect x="766" y="257" width="8" height="3" fill="#00ff00" stroke="none" /><rect x="797" y="257" width="8" height="3" fill="#00ff00" stroke="none" /><rect x="725" y="248" width="9" height="3" fill="#00ff00" stroke="none" /><path d="M969 251.5H1082" stroke="#ffffff" stroke-width="1" /><path d="M969 260.5H1082" stroke="#ffffff" stroke-width="1" /><rect x="985" y="257" width="8" height="3" fill="#00ff00" stroke="none" /><rect x="1022" y="257" width="8" height="3" fill="#00ff00" stroke="none" /><rect x="1058" y="257" width="8" height="3" fill="#00ff00" stroke="none" /><rect x="1021" y="248" width="9" height="3" fill="#00ff00" stroke="none" /><path d="M643.5 270V670" stroke="#ff0000" stroke-dasharray="14.600 0.900 3.600 0.900"/><path d="M679.5 270V670" stroke="#ff0000" stroke-dasharray="14.600 0.900 3.600 0.900"/><path d="M716.5 270V670" stroke="#ff0000" stroke-dasharray="14.600 0.900 3.600 0.900"/><path d="M752.5 270V670" stroke="#ff0000" stroke-dasharray="14.600 0.900 3.600 0.900"/><path d="M786.5 270V670" stroke="#ff0000" stroke-dasharray="14.600 0.900 3.600 0.900"/><path d="M815.5 270V670" stroke="#ff0000" stroke-dasharray="14.600 0.900 3.600 0.900"/><clipPath id="c1"><path d="M629 338H821V486.500L811.400 482.300L797.300 489.500H756V614L629 628.500z"/></clipPath><g clip-path="url(#c1)"><path d="M643.5 359V628M649.5 359V628M655.5 359V628M661.5 359V628M667.5 359V628M673.5 359V628M679.5 359V628M685.5 359V628M691.5 359V628M698.5 359V628M704.5 359V628M710.5 359V628M716.5 359V628M722.5 359V628M728.5 359V628M734.5 359V628M740.5 359V628M746.5 359V628M752.5 359V628M758.5 359V628M764.5 359V628M770.5 359V628M776.5 359V628M783.5 359V628M789.5 359V628M795.5 359V628M801.5 359V628M807.5 359V628M813.5 359V628M819.5 359V628M631.5 343V629M633.5 347V629M635.5 351V629M637.5 355V629M638.5 357V629M629 364.5H821M629 372.5H821M629 384.5H821M629 392.5H821M629 403.5H821M629 411.5H821M629 423.5H821M629 431.5H821M629 442.5H821M629 450.5H821M629 462.5H821M629 470.5H821M629 481.5H821M629 489.5H821M629 500.5H821M629 508.5H821M629 520.5H821M629 528.5H821M629 539.5H821M629 547.5H821M629 559.5H821M629 567.5H821M629 578.5H821M629 586.5H821M629 598.5H821M629 606.5H821M629 617.5H821M629 625.5H821" stroke="#00ffff" stroke-width="1" fill="none"/><path d="M698 359V628M771 359V628M629 450H821M629 489H821" stroke="#00ffff" stroke-width="2" fill="none"/></g><path d="M629.5 628V338.5H651.5" stroke="#808080" stroke-width="1" fill="none" /><path d="M630 340L640 359" stroke="#808080" stroke-width="1" fill="none" /><path d="M652 342.5H784" stroke="#00ffff" stroke-width="1" /><path d="M652 350.5H784" stroke="#00ffff" stroke-width="1" /><path d="M651.5 359.5V338.5H784" stroke="#ffff00" stroke-width="1" fill="none" /><path d="M640 359.5H820.5" stroke="#ffff00" stroke-width="1" fill="none" /><path d="M640.5 359V627" stroke="#ffff00" stroke-width="1" /><pattern id="ht" width="13" height="6" patternUnits="userSpaceOnUse"><rect width="13" height="6" fill="#404040"/><g fill="#000"><rect x="0" y="0" width="2" height="2"/><rect x="3" y="0" width="1" height="2"/><rect x="5" y="0" width="3" height="2"/><rect x="9" y="0" width="1" height="2"/><rect x="11" y="0" width="1" height="2"/><rect x="1" y="3" width="1" height="2"/><rect x="3" y="3" width="3" height="2"/><rect x="7" y="3" width="1" height="2"/><rect x="9" y="3" width="3" height="2"/></g></pattern><pattern id="ht1" width="17" height="9" patternUnits="userSpaceOnUse"><rect width="17" height="9" fill="#404040"/><g fill="#000"><rect x="11" y="1" width="1" height="2"/><rect x="14" y="1" width="2" height="2"/><rect x="5" y="4" width="1" height="2"/><rect x="7" y="4" width="1" height="2"/><rect x="13" y="4" width="1" height="2"/><rect x="15" y="7" width="1" height="2"/><rect x="3" y="7" width="1" height="2"/></g></pattern><rect x="757" y="319" width="27" height="20" fill="url(#ht1)" stroke="none" /><rect x="784" y="319" width="37" height="32" fill="url(#ht)" stroke="none" /><path d="M756.5 338V319.5H784" stroke="#808080" stroke-width="1" fill="none" /><path d="M784 319.5H820.5V350" stroke="#ffff00" stroke-width="1" fill="none" stroke-dasharray="4 1 1 1"/><path d="M784 319V350.5H820.5V359" stroke="#ffff00" stroke-width="2" fill="none" /><path d="M757 338.5H784" stroke="#ffff00" stroke-width="1" stroke-dasharray="4 1 1 1"/><path d="M820.5 359V486" stroke="#ffff00" stroke-width="1" /><path d="M755.5 489.5V613.5" stroke="#ffff00" stroke-width="1" fill="none" /><path d="M755.5 489.5H797M773.5 489.5V501.5L811.5 482.5L835.5 492.5V606.500L820.5 613.5H771.5V599.500H764.5V489.5" stroke="#ffff00" stroke-width="1" fill="none" /><path d="M811.5 482.5V604.500L771.5 613.5M811.5 604.500L835.5 606.500" stroke="#ffff00" stroke-width="1" fill="none" /><path d="M640 627.5L756 613.5" stroke="#ffff00" stroke-width="1" fill="none" /><path d="M784.5 489V496" stroke="#ffffff" stroke-width="1" /><path d="M788.5 489V494" stroke="#ffffff" stroke-width="1" /><path d="M631.5 628V643" stroke="#ffffff" stroke-width="1" /><path d="M635.5 628V643" stroke="#ffffff" stroke-width="1" /><path d="M641.5 627V643" stroke="#ffffff" stroke-width="1" /><path d="M645.5 627V643" stroke="#ffffff" stroke-width="1" /><path d="M678.5 623V643" stroke="#ffffff" stroke-width="1" /><path d="M682.5 623V643" stroke="#ffffff" stroke-width="1" /><path d="M714.5 618V643" stroke="#ffffff" stroke-width="1" /><path d="M718.5 618V643" stroke="#ffffff" stroke-width="1" /><path d="M752.5 614V643" stroke="#ffffff" stroke-width="1" /><path d="M755.5 614V643" stroke="#ffffff" stroke-width="1" /><path d="M682 625.5H714" stroke="#808080" stroke-width="1" /><path d="M771.5 614V643" stroke="#808080" stroke-width="1" /><path d="M775.5 614V643" stroke="#808080" stroke-width="1" /><path d="M820.5 614V643" stroke="#808080" stroke-width="1" /><clipPath id="c2"><path d="M913 338H1088V492.600L1064.300 482.700L1056.500 489.500H1025V614L913 628.500z"/></clipPath><g clip-path="url(#c2)"><path d="M913.5 359V628M916.5 359V628M922.5 359V628M928.5 359V628M934.5 359V628M940.5 359V628M946.5 359V628M951.5 359V628M957.5 359V628M963.5 359V628M969.5 359V628M975.5 359V628M981.5 359V628M987.5 359V628M993.5 359V628M999.5 359V628M1004.5 359V628M1010.5 359V628M1016.5 359V628M1022.5 359V628M1028.5 359V628M1034.5 359V628M1040.5 359V628M1046.5 359V628M1052.5 359V628M1057.5 359V628M1063.5 359V628M1069.5 359V628M1075.5 359V628M1081.5 359V628M913 364.5H1088M913 372.5H1088M913 384.5H1088M913 392.5H1088M913 403.5H1088M913 411.5H1088M913 423.5H1088M913 431.5H1088M913 442.5H1088M913 450.5H1088M913 462.5H1088M913 470.5H1088M913 481.5H1088M913 489.5H1088M913 500.5H1088M913 508.5H1088M913 520.5H1088M913 528.5H1088M913 539.5H1088M913 547.5H1088M913 559.5H1088M913 567.5H1088M913 578.5H1088M913 586.5H1088M913 598.5H1088M913 606.5H1088M913 617.5H1088M913 625.5H1088" stroke="#00ffff" stroke-width="1" fill="none"/><path d="M913 489H1088" stroke="#00ffff" stroke-width="2" fill="none"/></g><path d="M935.5 339V359M944.5 339V359M953.5 339V359M962.5 339V359M971.5 339V359M979.5 339V359M988.5 339V359M997.5 339V359M1006.5 339V359M1015.5 339V359M1024.5 339V359M1033.5 339V359M1042.5 339V359M1051.5 351V359M1060.5 351V359M1069.5 351V359M1078.5 351V359M925 350.500H1087" stroke="#00ffff" stroke-width="1" fill="none" /><path d="M913.5 359V338.5H925" stroke="#808080" stroke-width="1" fill="none" /><path d="M925.5 359V338.5H1043" stroke="#ffff00" stroke-width="1" fill="none" /><path d="M913.5 628V359.5H1087.5V486" stroke="#ffff00" stroke-width="1" fill="none" /><rect x="1044" y="318" width="44" height="33" fill="url(#ht)" stroke="none" /><path d="M1043.5 317.5H1087.5V350.5H1043.5z" stroke="#ffff00" stroke-width="1" fill="none" stroke-dasharray="4 1 1 1"/><path d="M1044 344.5H1087" stroke="#808080" stroke-width="1" /><path d="M1084.5 351V359M1087.5 351V359" stroke="#808080" stroke-width="1" fill="none" /><path d="M1024.5 489.5V613.5M1024.5 489.5H1056" stroke="#ffff00" stroke-width="1" fill="none" /><path d="M913.5 627.5L1024.5 613.5" stroke="#ffff00" stroke-width="1" fill="none" /><path d="M1064.5 482.5V604.500L1087.5 606.500V492.5z" stroke="#ffff00" stroke-width="1" fill="none" /><path d="M1043.5 501.5L1064.5 482.5" stroke="#808080" stroke-width="1" fill="none" /><path d="M1053.500 494v-4h3v2h-3" stroke="#fff" stroke-width="1" fill="none" /><path d="M1029.5 489V599" stroke="#808080" stroke-width="1" /><path d="M1038.5 489V599" stroke="#808080" stroke-width="1" /><path d="M1026.5 613V599.500H1041.5V643" stroke="#808080" stroke-width="1" fill="none" /><path d="M998.5 617V643" stroke="#808080" stroke-width="1" /><path d="M1007.5 617V643" stroke="#808080" stroke-width="1" /><path d="M1016.5 617V643" stroke="#808080" stroke-width="1" /><path d="M1025.5 617V643" stroke="#808080" stroke-width="1" /><path d="M1033.5 617V643" stroke="#808080" stroke-width="1" /><path d="M1045.5 614V643" stroke="#808080" stroke-width="1" /><path d="M1053.5 614V643" stroke="#808080" stroke-width="1" /><path d="M1061.5 614V643" stroke="#808080" stroke-width="1" /><path d="M1087.5 614V643" stroke="#808080" stroke-width="1" /><path d="M1020.5 615V643" stroke="#ffffff" stroke-width="1" /><path d="M1041.5 613.5H1087.5M1041.5 613.5L1064.5 604.500" stroke="#808080" stroke-width="1" fill="none" /><path d="M1068.5 606L1072.5 643M1083.5 606L1079.5 643M1068 606.500H1084" stroke="#ffffff" stroke-width="2" fill="none" /><path d="M914.5 628V643" stroke="#ffffff" stroke-width="1" /><path d="M919.5 627V643" stroke="#ffffff" stroke-width="1" /><path d="M950.5 623V643" stroke="#ffffff" stroke-width="1" /><path d="M954.5 623V643" stroke="#ffffff" stroke-width="1" /><path d="M959.5 625V643" stroke="#ffffff" stroke-width="1" /><path d="M963.5 625V643" stroke="#ffffff" stroke-width="1" /><path d="M967.5 625V643" stroke="#ffffff" stroke-width="1" /><path d="M971.5 625V643" stroke="#ffffff" stroke-width="1" /><path d="M986.5 619V643" stroke="#ffffff" stroke-width="1" /><path d="M990.5 618V643" stroke="#ffffff" stroke-width="1" /><path d="M954 625.5H986" stroke="#808080" stroke-width="1" /><path d="M588 317.5H1122" stroke="#ff0000" stroke-dasharray="21.600 0.900 15.600 0.900"/><path d="M588 343.5H1122" stroke="#ff0000" stroke-dasharray="21.600 0.900 15.600 0.900"/><path d="M588 365.5H1122" stroke="#ff0000" stroke-dasharray="21.600 0.900 15.600 0.900"/><path d="M588 385.5H1122" stroke="#ff0000" stroke-dasharray="21.600 0.900 15.600 0.900"/><path d="M588 404.5H1122" stroke="#ff0000" stroke-dasharray="21.600 0.900 15.600 0.900"/><path d="M588 424.5H1122" stroke="#ff0000" stroke-dasharray="21.600 0.900 15.600 0.900"/><path d="M588 443.5H1122" stroke="#ff0000" stroke-dasharray="21.600 0.900 15.600 0.900"/><path d="M588 463.5H1122" stroke="#ff0000" stroke-dasharray="21.600 0.900 15.600 0.900"/><path d="M588 482.5H1122" stroke="#ff0000" stroke-dasharray="21.600 0.900 15.600 0.900"/><path d="M588 501.5H1122" stroke="#ff0000" stroke-dasharray="21.600 0.900 15.600 0.900"/><path d="M588 521.5H1122" stroke="#ff0000" stroke-dasharray="21.600 0.900 15.600 0.900"/><path d="M588 540.5H1122" stroke="#ff0000" stroke-dasharray="21.600 0.900 15.600 0.900"/><path d="M588 560.5H1122" stroke="#ff0000" stroke-dasharray="21.600 0.900 15.600 0.900"/><path d="M588 579.5H1122" stroke="#ff0000" stroke-dasharray="21.600 0.900 15.600 0.900"/><path d="M588 599.5H1122" stroke="#ff0000" stroke-dasharray="21.600 0.900 15.600 0.900"/><path d="M588 618.5H1122" stroke="#ff0000" stroke-dasharray="21.600 0.900 15.600 0.900"/><path d="M970.5 270V670" stroke="#ff0000" stroke-dasharray="14.600 0.900 3.600 0.900"/><path d="M1007.5 270V670" stroke="#ff0000" stroke-dasharray="14.600 0.900 3.600 0.900"/><path d="M1043.5 270V670" stroke="#ff0000" stroke-dasharray="14.600 0.900 3.600 0.900"/><path d="M1080.5 270V670" stroke="#ff0000" stroke-dasharray="14.600 0.900 3.600 0.900"/><path d="M587 643.5H1122" stroke="#ffff00" stroke-width="1" /><text x="707" y="688.500" font-size="12" font-weight="bold" fill="#00ffff" font-family="Liberation Sans,sans-serif">A</text><text x="719" y="683" font-size="8.500" font-weight="bold" fill="#00ffff" font-family="Liberation Sans,sans-serif" textLength="37" lengthAdjust="spacingAndGlyphs">입면도-1</text><path d="M718 684.5H759" stroke="#00ffff" stroke-width="1" /><rect x="719" y="686" width="30" height="5" fill="#00ffff" stroke="none" /><text x="984.5" y="688.500" font-size="12" font-weight="bold" fill="#00ffff" font-family="Liberation Sans,sans-serif">A</text><text x="996.5" y="683" font-size="8.500" font-weight="bold" fill="#00ffff" font-family="Liberation Sans,sans-serif" textLength="37" lengthAdjust="spacingAndGlyphs">입면도-2</text><path d="M995.5 684.5H1036.5" stroke="#00ffff" stroke-width="1" /><rect x="996.5" y="686" width="30" height="5" fill="#00ffff" stroke="none" /><path d="M1177 177.500H1256" stroke="#0000ff" stroke-width="3" fill="none" /><path d="M1255.0 176V715" stroke="#0000ff" stroke-width="2" /><path d="M1177 713.500H1256" stroke="#0000ff" stroke-width="3" fill="none" /><path d="M1172 225.5H1254" stroke="#0000ff" stroke-width="1" /><path d="M1172 240.5H1254" stroke="#0000ff" stroke-width="1" /><path d="M1172 269.5H1254" stroke="#0000ff" stroke-width="1" /><path d="M1172 299.5H1254" stroke="#0000ff" stroke-width="1" /><path d="M1172 358.5H1254" stroke="#0000ff" stroke-width="1" /><path d="M1172 329.0H1254" stroke="#0000ff" stroke-width="2" fill="none" /><path d="M1172 388.5H1254" stroke="#0000ff" stroke-width="2" fill="none" /><path d="M1172 514.5H1254" stroke="#0000ff" stroke-width="1" /><path d="M1172 523.5H1254" stroke="#0000ff" stroke-width="1" /><path d="M1172 532.5H1254" stroke="#0000ff" stroke-width="1" /><path d="M1172 540.5H1254" stroke="#0000ff" stroke-width="1" /><path d="M1172 549.5H1254" stroke="#0000ff" stroke-width="1" /><path d="M1172 558.5H1254" stroke="#0000ff" stroke-width="1" /><path d="M1172 567.5H1254" stroke="#0000ff" stroke-width="1" /><path d="M1172 575.5H1254" stroke="#0000ff" stroke-width="1" /><path d="M1172 584.5H1254" stroke="#0000ff" stroke-width="1" /><path d="M1172 593.5H1254" stroke="#0000ff" stroke-width="1" /><path d="M1182.5 514V592" stroke="#0000ff" stroke-width="1" /><path d="M1236.5 514V592" stroke="#0000ff" stroke-width="1" /><path d="M1172 604.5H1254" stroke="#0000ff" stroke-width="1" /><path d="M1172 655H1254" stroke="#0000ff" stroke-width="2" fill="none" /><path d="M1172 663.5H1212" stroke="#0000ff" stroke-width="1" /><path d="M1172 672.5H1254" stroke="#0000ff" stroke-width="1" /><path d="M1172 681.5H1212" stroke="#0000ff" stroke-width="1" /><path d="M1172 690.5H1254" stroke="#0000ff" stroke-width="1" /><path d="M1212.5 656V690" stroke="#0000ff" stroke-width="1" /><rect x="1177" y="178" width="9" height="2" fill="#c0c0c0" stroke="none" /><rect x="1173" y="227" width="11" height="1" fill="#c0c0c0" stroke="none" /><rect x="1173" y="242" width="7" height="1" fill="#c0c0c0" stroke="none" /><rect x="1173" y="271" width="7" height="1" fill="#c0c0c0" stroke="none" /><rect x="1173" y="301" width="7" height="1" fill="#c0c0c0" stroke="none" /><rect x="1173" y="330" width="10" height="2" fill="#c0c0c0" stroke="none" /><rect x="1173" y="360" width="12" height="1" fill="#c0c0c0" stroke="none" /><rect x="1173" y="390" width="8" height="2" fill="#c0c0c0" stroke="none" /><rect x="1175" y="588" width="4" height="2" fill="#c0c0c0" stroke="none" /><rect x="1199" y="588" width="21" height="2" fill="#c0c0c0" stroke="none" /><rect x="1242" y="588" width="6" height="2" fill="#c0c0c0" stroke="none" /><rect x="1195" y="597" width="33" height="3" fill="#c0c0c0" stroke="none" /><rect x="1173" y="607" width="14" height="2" fill="#c0c0c0" stroke="none" /><rect x="1173" y="657" width="7" height="2" fill="#c0c0c0" stroke="none" /><rect x="1173" y="665" width="8" height="2" fill="#c0c0c0" stroke="none" /><rect x="1173" y="674" width="8" height="2" fill="#c0c0c0" stroke="none" /><rect x="1173" y="683" width="5" height="2" fill="#c0c0c0" stroke="none" /><rect x="1173" y="691" width="12" height="3" fill="#c0c0c0" stroke="none" /><rect x="1214" y="657" width="6" height="2" fill="#c0c0c0" stroke="none" /><rect x="1214" y="674" width="5" height="2" fill="#c0c0c0" stroke="none" /><rect x="1189" y="658" width="3" height="5" fill="#00ff00" stroke="none" /><rect x="1189" y="667" width="3" height="4" fill="#00ff00" stroke="none" /><rect x="1189" y="676" width="3" height="4" fill="#00ff00" stroke="none" /><rect x="1189" y="685" width="11" height="3" fill="#00ff00" stroke="none" /><rect x="1221" y="680" width="24" height="4" fill="#00ff00" stroke="none" /><rect x="1223" y="661" width="19" height="4" fill="#00ffff" stroke="none" /><rect x="1223" y="666" width="19" height="4" fill="#00ffff" stroke="none" /><text x="1212.500" y="199.500" font-size="10" font-weight="bold" fill="#00ff00" font-family="Liberation Sans,sans-serif" text-anchor="middle" textLength="46">Y-Project</text><text x="1212" y="213.500" font-size="9" font-weight="bold" fill="#00ff00" font-family="Liberation Sans,sans-serif" text-anchor="middle" textLength="35" lengthAdjust="spacingAndGlyphs">신축공사</text><text x="1213" y="237.500" font-size="8.500" fill="#00ffff" font-family="Liberation Sans,sans-serif" text-anchor="middle">57273</text><text x="1213.500" y="338.500" font-size="10.500" font-weight="bold" fill="#ffb400" stroke="#ffb400" stroke-width="0.600" font-family="Liberation Sans,sans-serif" text-anchor="middle" textLength="45">Chang-jo</text><rect x="1195" y="340" width="38" height="3" fill="#e8e8e8" stroke="none" fill-opacity="0.85"/><rect x="1198" y="340" width="1" height="3" fill="#000" stroke="none" /><rect x="1202" y="340" width="1" height="3" fill="#000" stroke="none" /><rect x="1206" y="340" width="1" height="3" fill="#000" stroke="none" /><rect x="1210" y="340" width="1" height="3" fill="#000" stroke="none" /><rect x="1214" y="340" width="1" height="3" fill="#000" stroke="none" /><rect x="1218" y="340" width="1" height="3" fill="#000" stroke="none" /><rect x="1222" y="340" width="1" height="3" fill="#000" stroke="none" /><rect x="1226" y="340" width="1" height="3" fill="#000" stroke="none" /><rect x="1230" y="340" width="1" height="3" fill="#000" stroke="none" /><rect x="1175" y="345" width="1" height="13" fill="#0000ff" stroke="none" /><path d="M1178 346.5h53" stroke="#0000ff" stroke-width="1" fill="none" stroke-dasharray="5 1 3 1 7 1 2 1"/><path d="M1178 348.5h62" stroke="#0000ff" stroke-width="1" fill="none" stroke-dasharray="5 1 3 1 7 1 2 1"/><path d="M1238 349.5h13" stroke="#0000ff" stroke-width="1" fill="none" stroke-dasharray="5 1 3 1 7 1 2 1"/><path d="M1178 350.5h64" stroke="#0000ff" stroke-width="1" fill="none" stroke-dasharray="5 1 3 1 7 1 2 1"/><path d="M1178 352.5h58" stroke="#0000ff" stroke-width="1" fill="none" stroke-dasharray="5 1 3 1 7 1 2 1"/><path d="M1178 354.5h40" stroke="#0000ff" stroke-width="1" fill="none" stroke-dasharray="5 1 3 1 7 1 2 1"/><path d="M1180 356.5h36" stroke="#0000ff" stroke-width="1" fill="none" stroke-dasharray="5 1 3 1 7 1 2 1"/><text x="1212" y="634" font-size="10.500" font-weight="bold" fill="#00ffff" font-family="Liberation Sans,sans-serif" text-anchor="middle" textLength="46">입면도-1,2</text><text x="1211" y="706" font-size="9.500" font-weight="bold" fill="#00ffff" font-family="Liberation Sans,sans-serif" text-anchor="middle" textLength="41">CA A3.01</text><path d="M1172 177.500H494.500V714.500H1172" stroke="#0000ff" stroke-width="1" fill="none" /><path d="M493.500 176.500H1171.500V713.500H493.500z" stroke="#fff" stroke-width="1" fill="none" stroke-dasharray="3 2"/><path d="M670.5 177V181" stroke="#0000ff" stroke-width="1" /><path d="M670.5 710V714" stroke="#0000ff" stroke-width="1" /><path d="M837.5 177V181" stroke="#0000ff" stroke-width="1" /><path d="M837.5 710V714" stroke="#0000ff" stroke-width="1" /><path d="M1004.5 177V181" stroke="#0000ff" stroke-width="1" /><path d="M1004.5 710V714" stroke="#0000ff" stroke-width="1" /><path d="M494 311.5H498" stroke="#0000ff" stroke-width="1" /><path d="M1167 311.5H1171" stroke="#0000ff" stroke-width="1" /><path d="M494 445.5H498" stroke="#0000ff" stroke-width="1" /><path d="M1167 445.5H1171" stroke="#0000ff" stroke-width="1" /><path d="M494 579.5H498" stroke="#0000ff" stroke-width="1" /><path d="M1167 579.5H1171" stroke="#0000ff" stroke-width="1" /><rect x="488.5" y="171.5" width="10" height="10" fill="#0040ff" stroke="#707070" /><rect x="1166.5" y="171.5" width="10" height="10" fill="#0040ff" stroke="#707070" /><rect x="488.5" y="708.5" width="10" height="10" fill="#0040ff" stroke="#707070" /><rect x="1166.5" y="708.5" width="10" height="10" fill="#0040ff" stroke="#707070" /><path d="M1071 714.500h4M1073.500 712v4M1087 716.500h4M1089.500 714v4" stroke="#fff" stroke-width="1" fill="none" /><path d="M288.500 789.500V879.500H343.500z M288.500 865.500H302.500V879.500" stroke="#0000ff" stroke-width="1" fill="none" /><path d="M291.500 819L295.500 824L301.500 818M295.500 824V830.500 M316.500 865L329 879M329 865.500L316.500 879" stroke="#0000ff" stroke-width="1" fill="none" /><path d="M265 820.5H1392" stroke="#fff" stroke-width="1" /><path d="M1039.5 101V902" stroke="#fff" stroke-width="1" /><rect x="1036.5" y="817.5" width="6" height="6" fill="none" stroke="#fff" /><path d="M756 501.5H764M756 503.5H764" stroke="#808080"/><path d="M756 521.5H764M756 523.5H764" stroke="#808080"/><path d="M756 540.5H764M756 542.5H764" stroke="#808080"/><path d="M756 560.5H764M756 562.5H764" stroke="#808080"/><path d="M756 579.5H764M756 581.5H764" stroke="#808080"/><path d="M756 599.5H764M756 601.5H764" stroke="#808080"/><path d="M1030 501.5H1038M1030 508.5H1038" stroke="#00ffff"/><path d="M1030 521.5H1038M1030 528.5H1038" stroke="#00ffff"/><path d="M1030 540.5H1038M1030 547.5H1038" stroke="#00ffff"/><path d="M1030 560.5H1038M1030 567.5H1038" stroke="#00ffff"/><path d="M1030 579.5H1038M1030 586.5H1038" stroke="#00ffff"/><path d="M1025 481.500H1088" stroke="#00ffff" stroke-width="2"/><path d="M1039.500 359V489" stroke="#ff0000"/></svg>
<div class="a" style="left:1392px;top:101px;width:2px;height:818px;background:#fff"></div>
<div class="a" style="left:1398px;top:357px;width:1px;height:565px;background:#a0a0a0"></div>
<div class="a" style="left:1399px;top:357px;width:1px;height:565px;background:#fff"></div>
<div class="a" style="left:265px;top:902px;width:1127px;height:16px;background:#d4d0c8"></div>
<div class="a" style="left:266px;top:903px;width:14px;height:14px;border:1px solid;border-color:#fff #808080 #808080 #fff"><svg style="left:0;top:0" width="12" height="12" viewBox="0 0 12 12"><path d="M9 2v8l-5-4zM3 2h1.500v8H3z" fill="#808080"/></svg></div>
<div class="a" style="left:280px;top:903px;width:14px;height:14px;border:1px solid;border-color:#fff #808080 #808080 #fff"><svg style="left:0;top:0" width="12" height="12" viewBox="0 0 12 12"><path d="M8 2v8l-5-4z" fill="#808080"/></svg></div>
<div class="a" style="left:294px;top:903px;width:14px;height:14px;border:1px solid;border-color:#fff #808080 #808080 #fff"><svg style="left:0;top:0" width="12" height="12" viewBox="0 0 12 12"><path d="M4 2v8l5-4z" fill="#808080"/></svg></div>
<div class="a" style="left:308px;top:903px;width:14px;height:14px;border:1px solid;border-color:#fff #808080 #808080 #fff"><svg style="left:0;top:0" width="12" height="12" viewBox="0 0 12 12"><path d="M3 2v8l5-4zM7.500 2h1.500v8h-1.500z" fill="#808080"/></svg></div>
<svg style="left:322px;top:902px" width="100" height="16" viewBox="0 0 100 16"><path d="M0 0l6 14.500h34l4-8" fill="none" stroke="#404040"/><path d="M1.500 0l5.500 13.500h33l3.500-7" fill="none" stroke="#fff" stroke-opacity="0.700"/><path d="M38 0h58l-8 15h-42z" fill="#000"/></svg>
<div class="t" style="left:333px;top:903px;font-size:12px">모형</div>
<div class="t" style="left:374px;top:903px;color:#fff;font-size:12px">A3-01</div>
<div class="a" style="left:265px;top:918px;width:1129px;height:2px;background:#fff"></div>
<div class="a" style="left:265px;top:924px;width:1129px;height:1px;background:#404040"></div>
<div class="a" style="left:265px;top:925px;width:1129px;height:1px;background:#808080"></div>
<div class="a" style="left:263px;top:926px;width:1px;height:67px;background:#404040"></div>
<div class="grip" style="left:270px;top:933px;width:3px;height:54px;"></div>
<div class="grip" style="left:274px;top:933px;width:3px;height:54px;"></div>
<div class="a" style="left:280px;top:934px;width:1107px;height:38px;background:#fff;border:1px solid;border-color:#404040 #fff #808080 #404040"></div>
<div class="a" style="left:280px;top:972px;width:1026px;height:19px;background:#fff;border-left:1px solid #404040;border-bottom:1px solid #fff"></div>
<div class="a" style="left:1306px;top:972px;width:81px;height:19px;background:#d4d0c8;border-bottom:1px solid #fff;border-right:1px solid #fff"></div>
<div class="t" style="left:283px;top:935px;font-family:'Liberation Mono',monospace;font-size:14px;letter-spacing:-0.4px;line-height:16px;height:16px"><span style="letter-spacing:2px">명령</span>: *<span style="letter-spacing:2px">취소</span>*</div>
<div class="t" style="left:283px;top:951px;font-family:'Liberation Mono',monospace;font-size:14px;letter-spacing:-0.4px;line-height:16px;height:16px"><span style="letter-spacing:2px">명령</span>:</div>
<div class="t" style="left:283px;top:974px;font-family:'Liberation Mono',monospace;font-size:14px;letter-spacing:-0.4px;line-height:16px;height:16px"><span style="letter-spacing:2px">명령</span>:</div>
<div class="a" style="left:1370px;top:936px;width:16px;height:35px;background:repeating-conic-gradient(#fff 0 25%,#d4d0c8 0 50%) 0 0/2px 2px"></div>
<div class="btn" style="left:1370px;top:936px;width:16px;height:16px;"><div class="a" style="left:3px;top:4px;width:0;height:0;border-left:4px solid transparent;border-right:4px solid transparent;border-bottom:4px solid #000"></div></div>
<div class="btn" style="left:1370px;top:955px;width:16px;height:16px;"><div class="a" style="left:3px;top:5px;width:0;height:0;border-left:4px solid transparent;border-right:4px solid transparent;border-top:4px solid #000"></div></div>
<div class="a" style="left:1308px;top:972px;width:62px;height:18px;background:repeating-conic-gradient(#fff 0 25%,#d4d0c8 0 50%) 0 0/2px 2px"></div>
<div class="btn" style="left:1308px;top:972px;width:15px;height:18px;"><div class="a" style="left:3px;top:4px;width:0;height:0;border-top:4px solid transparent;border-bottom:4px solid transparent;border-right:4px solid #000"></div></div>
<div class="btn" style="left:1323px;top:972px;width:16px;height:18px;"></div>
<div class="btn" style="left:1354px;top:972px;width:16px;height:18px;"><div class="a" style="left:5px;top:4px;width:0;height:0;border-top:4px solid transparent;border-bottom:4px solid transparent;border-left:4px solid #000"></div></div>
<div class="a" style="left:4px;top:992px;width:1390px;height:1px;background:#808080"></div>
<div class="a" style="left:4px;top:993px;width:1390px;height:1px;background:#fff"></div>
<div class="a" style="left:11px;top:997px;width:142px;height:18px;border:1px solid;border-color:#808080 #fff #fff #808080"></div>
<div class="t" style="left:14px;top:999px;letter-spacing:-0.2px">597,78,&nbsp;&nbsp;&nbsp; -88,74&nbsp; , 0,00</div>
<div class="a" style="left:158px;top:997px;width:27px;height:18px;background:#d4d0c8;border:1px solid;border-color:#fff #808080 #808080 #fff"><div class="t" style="left:0;right:0;top:1px;text-align:center;font-size:13px">스냅</div></div>
<div class="a" style="left:189px;top:997px;width:27px;height:18px;background:#d4d0c8;border:1px solid;border-color:#fff #808080 #808080 #fff"><div class="t" style="left:0;right:0;top:1px;text-align:center;font-size:13px">모눈</div></div>
<div class="a" style="left:221px;top:997px;width:28px;height:18px;background:#eceae5;border:1px solid;border-color:#404040 #fff #fff #404040"><div class="t" style="left:0;right:0;top:1px;text-align:center;font-size:13px">직교</div></div>
<div class="a" style="left:253px;top:997px;width:40px;height:18px;background:#d4d0c8;border:1px solid;border-color:#fff #808080 #808080 #fff"><div class="t" style="left:0;right:0;top:1px;text-align:center;font-size:13px">극좌표</div></div>
<div class="a" style="left:297px;top:997px;width:46px;height:18px;background:#eceae5;border:1px solid;border-color:#404040 #fff #fff #404040"><div class="t" style="left:0;right:0;top:1px;text-align:center;font-size:12px">OSNAP</div></div>
<div class="a" style="left:347px;top:997px;width:54px;height:18px;background:#eceae5;border:1px solid;border-color:#404040 #fff #fff #404040"><div class="t" style="left:0;right:0;top:1px;text-align:center;font-size:12px">OTRACK</div></div>
<div class="a" style="left:405px;top:997px;width:37px;height:18px;background:#eceae5;border:1px solid;border-color:#404040 #fff #fff #404040"><div class="t" style="left:0;right:0;top:1px;text-align:center;font-size:12px">DUCS</div></div>
<div class="a" style="left:446px;top:997px;width:29px;height:18px;background:#d4d0c8;border:1px solid;border-color:#fff #808080 #808080 #fff"><div class="t" style="left:0;right:0;top:1px;text-align:center;font-size:12px">DYN</div></div>
<div class="a" style="left:479px;top:997px;width:29px;height:18px;background:#d4d0c8;border:1px solid;border-color:#fff #808080 #808080 #fff"><div class="t" style="left:0;right:0;top:1px;text-align:center;font-size:12px">LWT</div></div>
<div class="a" style="left:512px;top:997px;width:28px;height:18px;background:#eceae5;border:1px solid;border-color:#404040 #fff #fff #404040"><div class="t" style="left:0;right:0;top:1px;text-align:center;font-size:13px">도면</div></div>
<div class="a" style="left:560px;top:998px;width:11px;height:16px;border:1px solid;border-color:#fff #808080 #808080 #fff"><div class="a" style="left:2px;top:4px;width:0;height:0;border-top:3px solid transparent;border-bottom:3px solid transparent;border-right:3px solid #b0aca4"></div></div>
<div class="a" style="left:600px;top:998px;width:11px;height:16px;border:1px solid;border-color:#fff #808080 #808080 #fff"><div class="a" style="left:3px;top:4px;width:0;height:0;border-top:3px solid transparent;border-bottom:3px solid transparent;border-left:3px solid #b0aca4"></div></div>
<svg style="left:576px;top:997px" width="20" height="18" viewBox="0 0 20 18"><rect x="2.500" y="2.500" width="15" height="14" fill="none" stroke="#e02020" stroke-dasharray="1.500 1.500"/><rect x="6.500" y="5.500" width="11" height="11" fill="url(#gl)" stroke="#17387c" stroke-width="1.400"/><rect x="8.500" y="7.500" width="7" height="7" fill="none" stroke="#fff"/><path d="M1 1l5 5M1 1h3.500M1 1v3.500" stroke="#17387c" stroke-width="1.600"/></svg>
<svg style="left:966px;top:999px" width="12" height="14" viewBox="0 0 12 14"><path d="M3.500 6V4a2.500 2.500 0 0 1 5 0v2" fill="none" stroke="#4868a8" stroke-width="1.300"/><rect x="2.500" y="6" width="7" height="7" rx="1" fill="#88a8d8" stroke="#3858a0" stroke-width="0.800"/><path d="M6 8v3" stroke="#fff" stroke-width="1.300"/></svg>
<div class="t" style="left:990px;top:999px;">VP 축척: 0,005000</div>
<div class="t" style="left:1099px;top:999px;letter-spacing:0.4px">주석 축척: 1:1</div>
<svg style="left:1187px;top:998px" width="16" height="16" viewBox="0 0 16 16"><path d="M2 15l5-10 5 10-5-3z" fill="#e8f0fc" stroke="#1c50a8" stroke-width="1.400"/><path d="M4.500 11h5" stroke="#1c50a8" stroke-width="1.200"/><circle cx="11.500" cy="4.500" r="3.500" fill="url(#gm)" stroke="#6898d8" stroke-width="0.800"/><rect x="10.300" y="8" width="2.400" height="1.800" fill="#6080b0"/></svg>
<svg style="left:1211px;top:998px" width="16" height="16" viewBox="0 0 16 16"><path d="M2 15l5-10 5 10-5-3z" fill="#e0e0e0" stroke="#a0a0a0" stroke-width="1.400"/><path d="M15 1l-3 5 2 0.500-5 6 1.500-5-2-0.500z" fill="#c8c8c8" stroke="#909090" stroke-width="0.600"/></svg>
<div class="a" style="left:1236px;top:997px;width:105px;height:18px;border:1px solid;border-color:#808080 #fff #fff #808080"></div>
<svg style="left:1240px;top:998px" width="16" height="16" viewBox="0 0 16 16"><path d="M7 7V4.500a3.200 3.200 0 0 1 6.400 0V6" fill="none" stroke="#d8a800" stroke-width="1.800"/><rect x="1" y="6.500" width="10" height="9" rx="1" fill="#e8c820" stroke="#403000" stroke-width="0.900"/><path d="M1.500 9h9M1.500 11.500h9M1.500 14h9" stroke="#705800" stroke-width="0.900"/><path d="M3.500 7v8" stroke="#fff8a0" stroke-width="1.200"/></svg>
<svg style="left:1260px;top:998px" width="16" height="16" viewBox="0 0 16 16"><path d="M1 5l5-4 3 2-2 3 3 1-1 3-4-1z" fill="#b8d0ec" stroke="#7898c0" stroke-width="0.600"/><circle cx="8" cy="4" r="1.300" fill="#30a040"/><rect x="7.500" y="7.500" width="8" height="8" fill="#fff" stroke="#1c50a8" stroke-width="1.300"/><path d="M9.500 10h4M9.500 12h4M9.500 14h4" stroke="#1c50a8" stroke-width="0.900"/></svg>
<svg style="left:1280px;top:998px" width="16" height="16" viewBox="0 0 16 16"><rect x="0.500" y="0.500" width="11" height="14" fill="#3868a8" stroke="#17387c" stroke-width="0.800"/><path d="M8 0.500h3.500v3.500z" fill="#c0d4ec"/><path d="M5 1v13M1 5h9" stroke="#fff" stroke-width="1"/><circle cx="5" cy="5" r="1.800" fill="#3868a8" stroke="#fff" stroke-width="0.900"/><circle cx="11.500" cy="11.500" r="4.200" fill="#20b020" stroke="#fff" stroke-width="0.800"/><path d="M9.300 11.500l1.700 2 3-4" stroke="#fff" stroke-width="1.500" fill="none"/></svg>
<svg style="left:1300px;top:998px" width="16" height="16" viewBox="0 0 16 16"><path d="M3 4l7 0 6 6-6 6-8-8z" fill="#d8e8f4" stroke="#4878b0" stroke-width="0.900" transform="rotate(-8 8 8)"/><path d="M8 9l4 4M10 7l4 4" stroke="#a8c0d8" stroke-width="0.700"/><path d="M2 0.500l3 4.500" stroke="#202020" stroke-width="1.300"/><rect x="3.500" y="4" width="4" height="4" rx="1" fill="#303030" transform="rotate(-30 5.500 6)"/><circle cx="5.500" cy="6" r="0.900" fill="#fff"/></svg>
<svg style="left:1320px;top:998px" width="16" height="16" viewBox="0 0 16 16"><ellipse cx="7" cy="5" rx="6" ry="4.500" fill="#b8d0ec" stroke="#88a8d0" stroke-width="0.600"/><path d="M1 4h11M1.500 6.500h11" stroke="#fff" stroke-width="1"/><path d="M9 4.500l6.500 11h-13z" fill="#ffe020" stroke="#c09000" stroke-width="0.900"/><path d="M9 8v4" stroke="#000" stroke-width="1.600"/><rect x="8.200" y="13" width="1.600" height="1.600" fill="#000"/></svg>
<div class="arr" style="left:1346px;top:1008px"></div>
<svg style="left:1361px;top:996px" width="17" height="17" viewBox="0 0 17 17"><rect x="1" y="1" width="15" height="15" fill="#fff" stroke="#17468c" stroke-width="1.600"/><rect x="3.500" y="3.500" width="10" height="10" fill="url(#gl)" stroke="#17468c" stroke-width="1.200"/></svg>
<svg style="left:1381px;top:1005px" width="12" height="12" viewBox="0 0 12 12"><path d="M11 1L1 11M11 5L5 11M11 9L9 11" stroke="#808080" stroke-width="1.500"/><path d="M11 2L2 11M11 6L6 11M11 10L10 11" stroke="#fff" stroke-width="1"/></svg>
</body></html>
